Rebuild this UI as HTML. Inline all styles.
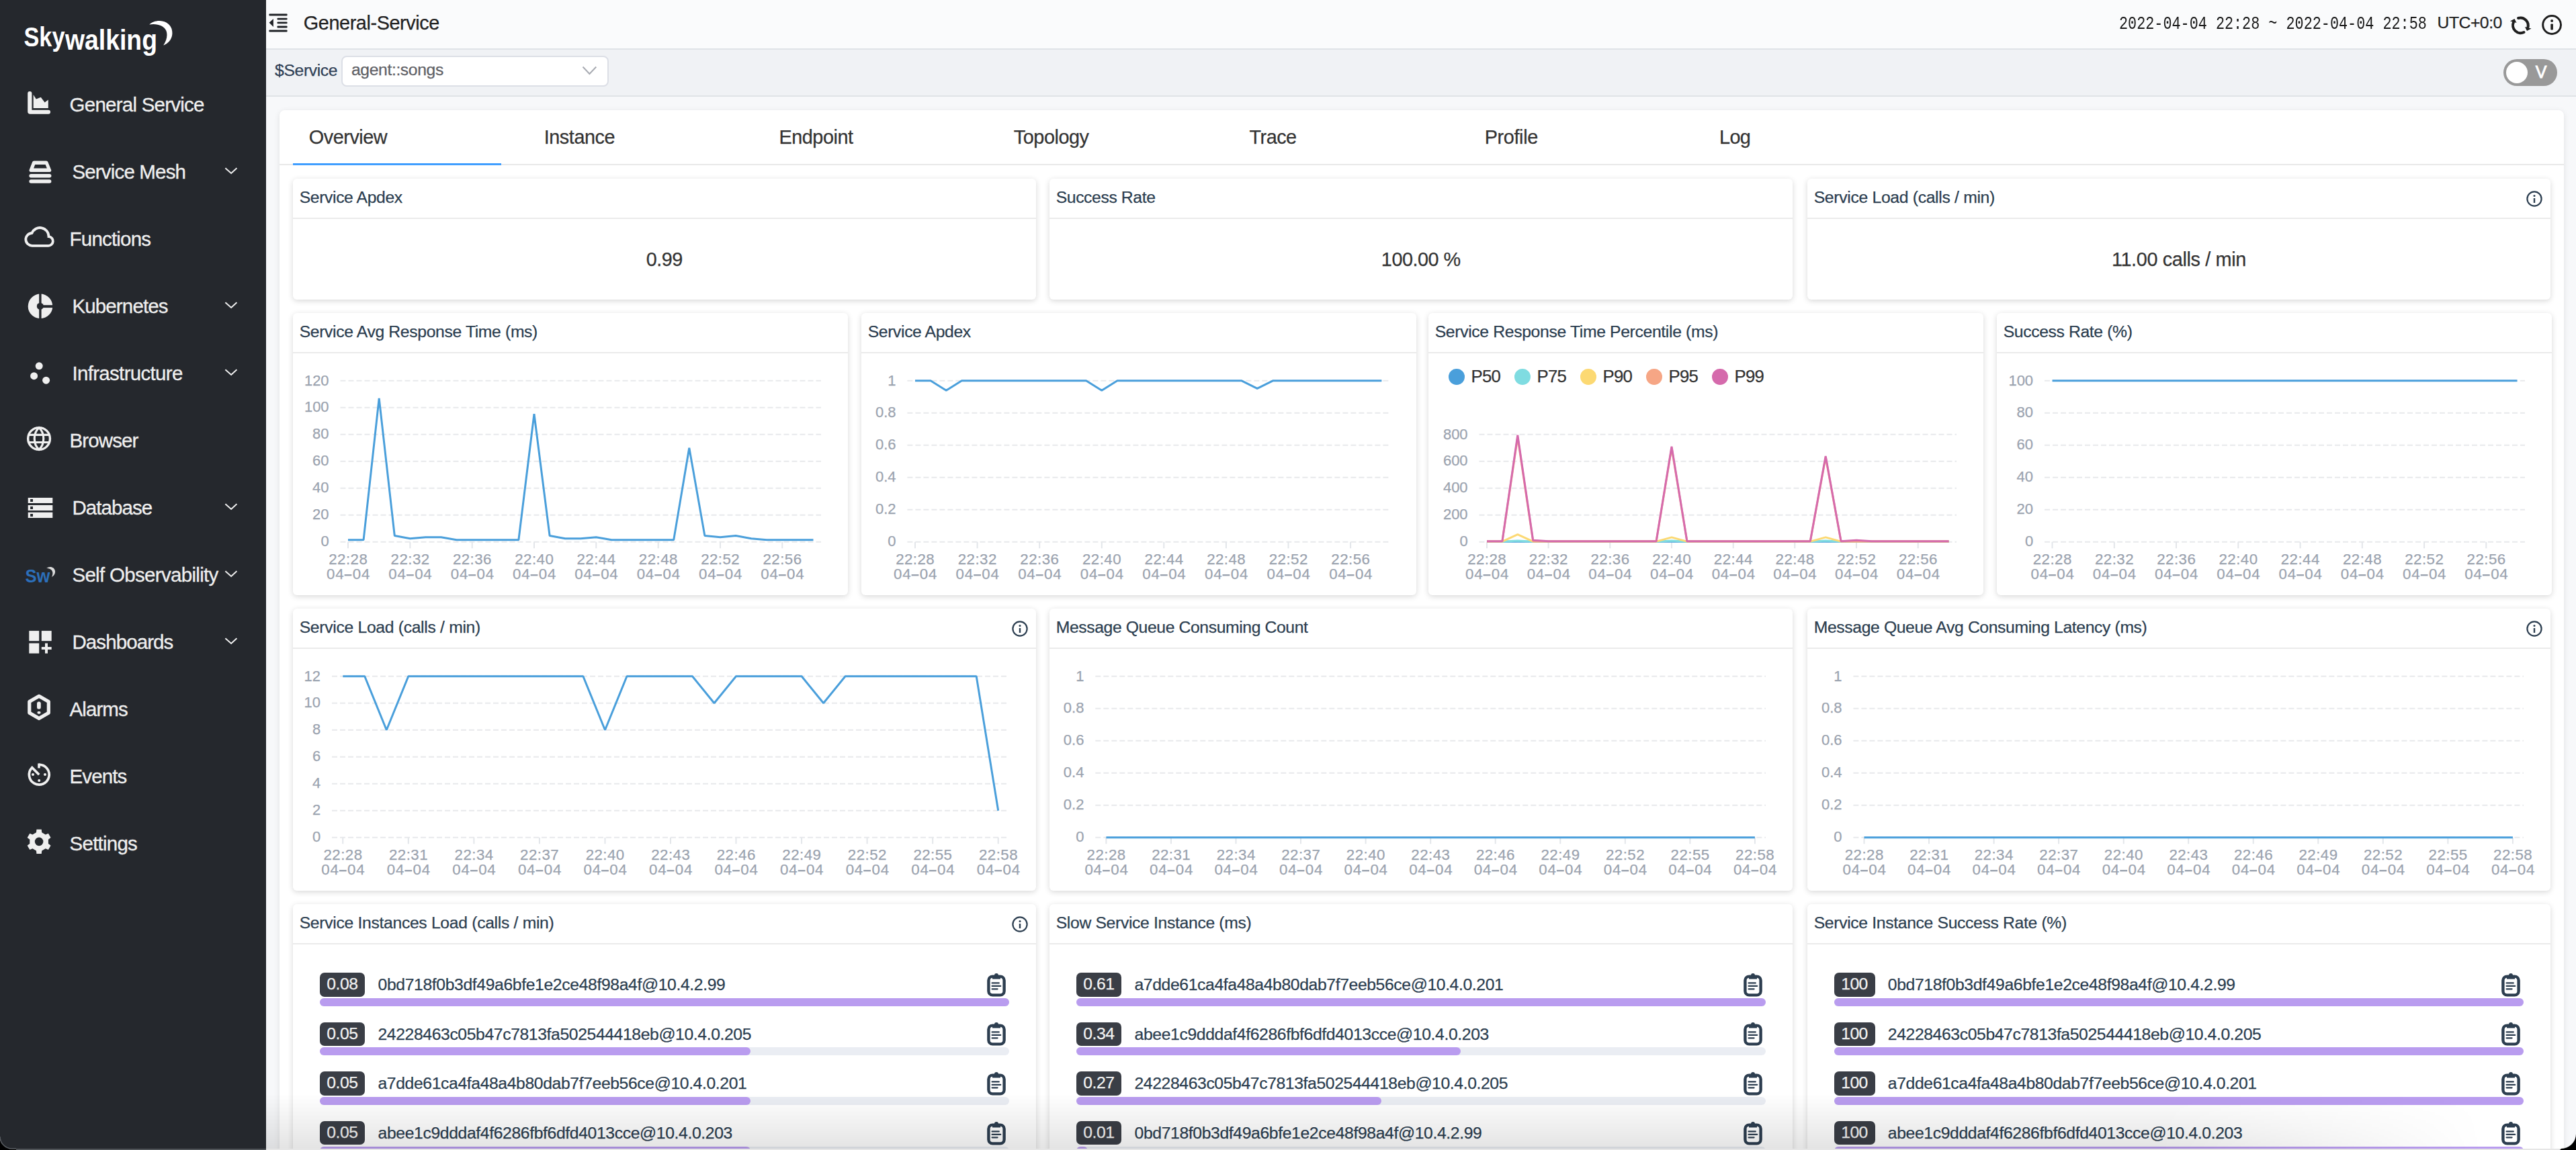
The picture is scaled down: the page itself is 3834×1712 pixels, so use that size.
<!DOCTYPE html>
<html><head><meta charset="utf-8"><title>SkyWalking</title>
<style>
html,body{margin:0;padding:0;width:3834px;height:1712px;overflow:hidden;background:#f7f8fa;font-family:"Liberation Sans",sans-serif;}
.t{position:absolute;white-space:nowrap;}
.a{position:absolute;}
</style></head><body>
<div class="a" style="left:0;top:0;width:396px;height:1712px;background:#25282d;"></div>
<svg class="a" style="left:0;top:0" width="396" height="100" viewBox="0 0 396 100">
<text x="35.5" y="69" font-family="Liberation Sans" font-weight="bold" font-size="41" fill="#fff" textLength="61" lengthAdjust="spacingAndGlyphs">Sky</text><text x="97" y="74" font-family="Liberation Sans" font-weight="bold" font-size="42" fill="#fff" textLength="137" lengthAdjust="spacingAndGlyphs">walking</text>
<path d="M222.3,36.5 C230,28.5 250,28 255.5,43 C259,55 252,64 243.2,67.4 C247.5,61 250,53 247.5,46 C244.5,38 233,34.5 222.3,36.5 Z" fill="#fff"/>
</svg>
<div class="t" style="left:103.60px;top:141.33px;font-size:29.5px;line-height:29.5px;color:#efefef;letter-spacing:-0.764px;-webkit-text-stroke:0.3px #efefef;">General Service</div>
<div class="t" style="left:107.40px;top:241.32px;font-size:29.5px;line-height:29.5px;color:#efefef;letter-spacing:-0.827px;-webkit-text-stroke:0.3px #efefef;">Service Mesh</div>
<svg class="a" style="left:330px;top:246.2px" width="30" height="20" viewBox="0 0 30 20"><polyline points="5.4,4.2 14.1,12 22.4,4.2" fill="none" stroke="#efefef" stroke-width="2"/></svg>
<div class="t" style="left:103.60px;top:341.32px;font-size:29.5px;line-height:29.5px;color:#efefef;letter-spacing:-0.812px;-webkit-text-stroke:0.3px #efefef;">Functions</div>
<div class="t" style="left:107.40px;top:441.32px;font-size:29.5px;line-height:29.5px;color:#efefef;letter-spacing:-0.856px;-webkit-text-stroke:0.3px #efefef;">Kubernetes</div>
<svg class="a" style="left:330px;top:446.2px" width="30" height="20" viewBox="0 0 30 20"><polyline points="5.4,4.2 14.1,12 22.4,4.2" fill="none" stroke="#efefef" stroke-width="2"/></svg>
<div class="t" style="left:107.40px;top:541.32px;font-size:29.5px;line-height:29.5px;color:#efefef;letter-spacing:-0.677px;-webkit-text-stroke:0.3px #efefef;">Infrastructure</div>
<svg class="a" style="left:330px;top:546.2px" width="30" height="20" viewBox="0 0 30 20"><polyline points="5.4,4.2 14.1,12 22.4,4.2" fill="none" stroke="#efefef" stroke-width="2"/></svg>
<div class="t" style="left:103.60px;top:641.32px;font-size:29.5px;line-height:29.5px;color:#efefef;letter-spacing:-0.917px;-webkit-text-stroke:0.3px #efefef;">Browser</div>
<div class="t" style="left:107.40px;top:741.32px;font-size:29.5px;line-height:29.5px;color:#efefef;letter-spacing:-0.914px;-webkit-text-stroke:0.3px #efefef;">Database</div>
<svg class="a" style="left:330px;top:746.2px" width="30" height="20" viewBox="0 0 30 20"><polyline points="5.4,4.2 14.1,12 22.4,4.2" fill="none" stroke="#efefef" stroke-width="2"/></svg>
<div class="t" style="left:107.40px;top:841.32px;font-size:29.5px;line-height:29.5px;color:#efefef;letter-spacing:-0.682px;-webkit-text-stroke:0.3px #efefef;">Self Observability</div>
<svg class="a" style="left:330px;top:846.2px" width="30" height="20" viewBox="0 0 30 20"><polyline points="5.4,4.2 14.1,12 22.4,4.2" fill="none" stroke="#efefef" stroke-width="2"/></svg>
<div class="t" style="left:107.40px;top:941.32px;font-size:29.5px;line-height:29.5px;color:#efefef;letter-spacing:-0.900px;-webkit-text-stroke:0.3px #efefef;">Dashboards</div>
<svg class="a" style="left:330px;top:946.2px" width="30" height="20" viewBox="0 0 30 20"><polyline points="5.4,4.2 14.1,12 22.4,4.2" fill="none" stroke="#efefef" stroke-width="2"/></svg>
<div class="t" style="left:103.60px;top:1041.33px;font-size:29.5px;line-height:29.5px;color:#efefef;letter-spacing:-0.940px;-webkit-text-stroke:0.3px #efefef;">Alarms</div>
<div class="t" style="left:103.60px;top:1141.33px;font-size:29.5px;line-height:29.5px;color:#efefef;letter-spacing:-0.920px;-webkit-text-stroke:0.3px #efefef;">Events</div>
<div class="t" style="left:103.60px;top:1241.33px;font-size:29.5px;line-height:29.5px;color:#efefef;letter-spacing:-0.771px;-webkit-text-stroke:0.3px #efefef;">Settings</div>
<svg class="a" style="left:0;top:0" width="100" height="1300" viewBox="0 0 100 1300">
<g fill="#efefef">
<!-- general service -->
<path d="M41.2,139 a3,3 0 0 1 6.2,0 V163.7 H72 a3,3 0 0 1 0,6.1 H45 a3.8,3.8 0 0 1 -3.8,-3.8 Z"/>
<polygon points="49.7,141 53.8,147.4 60.8,144.7 66.6,152.6 71.8,148.5 71.8,161 49.7,161"/>
<!-- service mesh -->
<path fill-rule="evenodd" d="M50.5,239.4 H69 a2.5,2.5 0 0 1 2.3,1.6 L76.2,253 a2.2,2.2 0 0 1 -2.1,2.9 H45.7 a2.2,2.2 0 0 1 -2.1,-2.9 L48.2,241 a2.5,2.5 0 0 1 2.3,-1.6 Z M52.2,245.1 H67.6 L69.9,250.6 H50.1 Z"/>
<rect x="43.4" y="259" width="33" height="5.4" rx="2.7"/>
<rect x="43.4" y="267.2" width="33" height="5.6" rx="2.8"/>
<!-- kubernetes -->
<circle cx="60" cy="455.9" r="18.3"/>
<!-- infrastructure -->
<circle cx="58.2" cy="544.8" r="5.5"/><circle cx="50.6" cy="559.7" r="5.5"/><circle cx="68.6" cy="566.2" r="5.5"/>
<!-- database -->
<path fill-rule="evenodd" d="M41.7,740.9 h36.6 v8.1 h-36.6 Z M45.1,743 v4 h3.9 v-4 Z"/>
<path fill-rule="evenodd" d="M41.7,751.9 h36.6 v8.1 h-36.6 Z M45.1,754 v4 h3.9 v-4 Z"/>
<path fill-rule="evenodd" d="M41.7,762.8 h36.6 v8.1 h-36.6 Z M45.1,764.9 v4 h3.9 v-4 Z"/>
<!-- dashboards -->
<rect x="43.3" y="939.1" width="14.9" height="15.1"/><rect x="61.8" y="939.1" width="14.9" height="15.1"/>
<rect x="43.3" y="957.6" width="14.9" height="15.1"/>
<rect x="67" y="957.6" width="4" height="15.1"/><rect x="61.8" y="963.1" width="14.9" height="3.9"/>
<!-- alarms ! -->
<rect x="55" y="1044.6" width="5.8" height="11" rx="2.9"/><rect x="55.4" y="1058.9" width="5.2" height="3.8" rx="1.9"/>
<!-- events dots -->
<circle cx="49" cy="1152.9" r="2"/><circle cx="67" cy="1152.9" r="2"/><circle cx="58.2" cy="1162" r="2"/>
<rect x="56.2" y="1136.5" width="3.6" height="7"/>
<!-- settings gear -->
<polygon points="53.95,1239.32 54.43,1234.87 61.77,1234.87 62.25,1239.32 67.78,1242.51 71.88,1240.71 75.55,1247.06 71.94,1249.71 71.94,1256.09 75.55,1258.74 71.88,1265.09 67.78,1263.29 62.25,1266.48 61.77,1270.93 54.43,1270.93 53.95,1266.48 48.42,1263.29 44.32,1265.09 40.65,1258.74 44.26,1256.09 44.26,1249.71 40.65,1247.06 44.32,1240.71 48.42,1242.51"/>
</g>
<circle cx="58.1" cy="1252.9" r="6.3" fill="#25282d"/>
<g fill="#25282d"><rect x="58.2" y="436" width="3.4" height="40"/><rect x="60" y="454.2" width="20" height="3.9"/><circle cx="59.8" cy="455.9" r="5"/></g>
<g fill="none" stroke="#efefef">
<!-- functions cloud -->
<path stroke-width="3.8" d="M48,365.8 H71.5 a6.8,6.8 0 0 0 1,-13.6 a13,13 0 0 0 -25,-5.2 a9.3,9.3 0 0 0 0.5,18.8 Z"/>
<!-- browser globe -->
<circle stroke-width="3.4" cx="58.05" cy="653" r="16.4"/>
<path stroke-width="3.2" d="M41.6,647.4 H74.5 M41.6,658.5 H74.5"/>
<path stroke-width="3.2" d="M58.05,636.6 C49,645 49,661 58.05,669.4 C67,661 67,645 58.05,636.6 Z"/>
<!-- alarms hexagon -->
<polygon stroke-width="5.2" stroke-linejoin="round" points="58.05,1036.30 72.34,1044.60 72.34,1061.20 58.05,1069.50 43.76,1061.20 43.76,1044.60"/>
<!-- events -->
<path stroke-width="3.7" d="M58.2,1138.3 A14.9,14.9 0 1 1 47.7,1142.7 L58.2,1153.2"/>
</g>
<!-- self observability -->
<text x="37.5" y="867.3" font-family="Liberation Sans" font-weight="bold" font-size="27" fill="#2c6fba" textLength="37" lengthAdjust="spacingAndGlyphs">Sw</text>
<path d="M69.2,846 C74,842 81,844 82,850 C82.5,854 80,857.5 77,859 C79,855 79,851 76.5,848.5 C74.5,846.5 71.5,846 69.2,846 Z" fill="#dcdcdc"/>
</svg>
<div class="a" style="left:396px;top:0;width:3438px;height:72px;background:#fafbfc;border-bottom:2px solid #dfe3e7;"></div>
<svg class="a" style="left:396px;top:16px" width="40" height="36" viewBox="396 16 40 36"><g fill="#1f2226">
<rect x="400.4" y="20.4" width="27.2" height="3.2" rx="1"/>
<rect x="412.5" y="26.7" width="15.1" height="2.8" rx="1"/>
<rect x="412.5" y="32.5" width="15.1" height="2.8" rx="1"/>
<rect x="412.5" y="38.6" width="15.1" height="2.8" rx="1"/>
<rect x="400.4" y="44.4" width="27.2" height="3.2" rx="1"/>
<polygon points="400.6,33.8 406.9,28 406.9,39.9"/>
</g></svg>
<div class="t" style="left:451.80px;top:19.79px;font-size:28.84px;line-height:28.84px;color:#222;letter-spacing:-0.414px;-webkit-text-stroke:0.25px #222;">General-Service</div>
<div class="t" style="left:3154px;top:27.5px;font-family:'Liberation Mono',monospace;font-size:21.8px;line-height:24px;color:#1a1a1a;transform:scaleY(1.3);transform-origin:0 100%;">2022-04-04 22:28 ~ 2022-04-04 22:58</div>
<div class="t" style="left:3627.50px;top:21.89px;font-size:24.72px;line-height:24.72px;color:#222;letter-spacing:-0.467px;-webkit-text-stroke:0.25px #222;">UTC+0:0</div>
<svg class="a" style="left:3725px;top:12px" width="100" height="50" viewBox="3725 12 100 50">
<g fill="none" stroke="#1f1f1f" stroke-width="4" stroke-linecap="round">
<path d="M3748,27 A11.5,11.5 0 0 1 3762,42"/>
<path d="M3756.5,48 A11.5,11.5 0 0 1 3741,33"/>
<circle cx="3798.1" cy="37" r="13.4" stroke-width="3" stroke-linecap="butt"/>
</g>
<g fill="#1f1f1f">
<polygon points="3736,31.5 3742.5,28 3745.5,34"/>
<polygon points="3767.5,42.5 3761,46 3758,40"/>
<circle cx="3798.1" cy="30.9" r="2"/>
<rect x="3796.3" y="35.5" width="3.6" height="9" rx="1"/>
</g></svg>
<div class="a" style="left:396px;top:74px;width:3438px;height:68px;background:#f0f2f5;border-bottom:2px solid #dfe3e7;"></div>
<div class="t" style="left:409.10px;top:93.09px;font-size:24.72px;line-height:24.72px;color:#304156;letter-spacing:-0.386px;-webkit-text-stroke:0.25px #304156;">$Service</div>
<div class="a" style="left:508px;top:82.5px;width:394px;height:42px;background:#fff;border:2px solid #dcdfe6;border-radius:8px;"></div>
<div class="t" style="left:522.90px;top:92.39px;font-size:24.72px;line-height:24.72px;color:#5f6166;letter-spacing:-0.373px;-webkit-text-stroke:0.25px #5f6166;">agent::songs</div>
<svg class="a" style="left:860px;top:94px" width="34" height="22" viewBox="860 94 34 22"><polyline points="867.5,99.5 877.4,110 887.3,99.5" fill="none" stroke="#a8abb2" stroke-width="2"/></svg>
<div class="a" style="left:3726.4px;top:87.8px;width:79.3px;height:39.9px;background:#999;border-radius:20px;"></div>
<div class="a" style="left:3729.6px;top:91.8px;width:32px;height:32px;background:#fff;border-radius:50%;"></div>
<div class="t" style="left:3773.85px;top:95.15px;font-size:25px;line-height:25px;color:#fff;-webkit-text-stroke:0.9px #fff;">V</div>
<div class="a" style="left:416px;top:164px;width:3400px;height:1620px;background:#fff;border-radius:8px;box-shadow:0 2px 8px rgba(0,0,0,0.10);"></div>
<div class="t" style="left:459.80px;top:189.69px;font-size:28.84px;line-height:28.84px;color:#333;letter-spacing:-0.471px;-webkit-text-stroke:0.25px #333;">Overview</div>
<div class="t" style="left:809.70px;top:189.69px;font-size:28.84px;line-height:28.84px;color:#333;letter-spacing:-0.443px;-webkit-text-stroke:0.25px #333;">Instance</div>
<div class="t" style="left:1159.40px;top:189.69px;font-size:28.84px;line-height:28.84px;color:#333;letter-spacing:-0.457px;-webkit-text-stroke:0.25px #333;">Endpoint</div>
<div class="t" style="left:1508.80px;top:189.69px;font-size:28.84px;line-height:28.84px;color:#333;letter-spacing:-0.457px;-webkit-text-stroke:0.25px #333;">Topology</div>
<div class="t" style="left:1859.50px;top:189.69px;font-size:28.84px;line-height:28.84px;color:#333;letter-spacing:-0.500px;-webkit-text-stroke:0.25px #333;">Trace</div>
<div class="t" style="left:2209.70px;top:189.69px;font-size:28.84px;line-height:28.84px;color:#333;letter-spacing:-0.367px;-webkit-text-stroke:0.25px #333;">Profile</div>
<div class="t" style="left:2559.10px;top:189.69px;font-size:28.84px;line-height:28.84px;color:#333;letter-spacing:-0.700px;-webkit-text-stroke:0.25px #333;">Log</div>
<div class="a" style="left:416px;top:244px;width:3400px;height:2px;background:#e9e9e9;"></div>
<div class="a" style="left:436px;top:243px;width:310px;height:3px;background:#409eff;"></div>
<div class="a" style="left:436px;top:266px;width:1106px;height:180px;background:#fff;border-radius:6px;box-shadow:0 2px 8px rgba(0,0,0,0.16);"></div>
<div class="a" style="left:436px;top:324px;width:1106px;height:2px;background:#ebebeb;"></div>
<div class="t" style="left:445.70px;top:281.69px;font-size:24.72px;line-height:24.72px;color:#2c3e50;letter-spacing:-0.375px;-webkit-text-stroke:0.25px #2c3e50;">Service Apdex</div>
<div class="t" style="left:961.75px;top:372.29px;font-size:28.84px;line-height:28.84px;color:#333;letter-spacing:-0.533px;-webkit-text-stroke:0.25px #333;">0.99</div>
<div class="a" style="left:1562px;top:266px;width:1106px;height:180px;background:#fff;border-radius:6px;box-shadow:0 2px 8px rgba(0,0,0,0.16);"></div>
<div class="a" style="left:1562px;top:324px;width:1106px;height:2px;background:#ebebeb;"></div>
<div class="t" style="left:1571.70px;top:281.69px;font-size:24.72px;line-height:24.72px;color:#2c3e50;letter-spacing:-0.391px;-webkit-text-stroke:0.25px #2c3e50;">Success Rate</div>
<div class="t" style="left:2055.85px;top:372.29px;font-size:28.84px;line-height:28.84px;color:#333;letter-spacing:-0.486px;-webkit-text-stroke:0.25px #333;">100.00 %</div>
<div class="a" style="left:2690px;top:266px;width:1106px;height:180px;background:#fff;border-radius:6px;box-shadow:0 2px 8px rgba(0,0,0,0.16);"></div>
<div class="a" style="left:2690px;top:324px;width:1106px;height:2px;background:#ebebeb;"></div>
<div class="t" style="left:2699.70px;top:281.69px;font-size:24.72px;line-height:24.72px;color:#2c3e50;letter-spacing:-0.316px;-webkit-text-stroke:0.25px #2c3e50;">Service Load (calls / min)</div>
<svg class="a" style="left:3757.5px;top:282.0px" width="28" height="28" viewBox="0 0 28 28"><circle cx="14" cy="14" r="10.6" fill="none" stroke="#2c3e50" stroke-width="2.2"/><circle cx="14" cy="9.6" r="1.5" fill="#2c3e50"/><rect x="12.8" y="13" width="2.4" height="7" fill="#2c3e50"/></svg>
<div class="t" style="left:3142.90px;top:372.29px;font-size:28.84px;line-height:28.84px;color:#333;letter-spacing:-0.363px;-webkit-text-stroke:0.25px #333;">11.00 calls / min</div>
<div class="a" style="left:436px;top:466px;width:826px;height:420px;background:#fff;border-radius:6px;box-shadow:0 2px 8px rgba(0,0,0,0.16);"></div>
<div class="a" style="left:436px;top:524px;width:826px;height:2px;background:#ebebeb;"></div>
<div class="t" style="left:445.70px;top:481.69px;font-size:24.72px;line-height:24.72px;color:#2c3e50;letter-spacing:-0.355px;-webkit-text-stroke:0.25px #2c3e50;">Service Avg Response Time (ms)</div>
<div class="a" style="left:1282px;top:466px;width:826px;height:420px;background:#fff;border-radius:6px;box-shadow:0 2px 8px rgba(0,0,0,0.16);"></div>
<div class="a" style="left:1282px;top:524px;width:826px;height:2px;background:#ebebeb;"></div>
<div class="t" style="left:1291.70px;top:481.69px;font-size:24.72px;line-height:24.72px;color:#2c3e50;letter-spacing:-0.375px;-webkit-text-stroke:0.25px #2c3e50;">Service Apdex</div>
<div class="a" style="left:2126px;top:466px;width:826px;height:420px;background:#fff;border-radius:6px;box-shadow:0 2px 8px rgba(0,0,0,0.16);"></div>
<div class="a" style="left:2126px;top:524px;width:826px;height:2px;background:#ebebeb;"></div>
<div class="t" style="left:2135.70px;top:481.69px;font-size:24.72px;line-height:24.72px;color:#2c3e50;letter-spacing:-0.342px;-webkit-text-stroke:0.25px #2c3e50;">Service Response Time Percentile (ms)</div>
<div class="a" style="left:2972px;top:466px;width:826px;height:420px;background:#fff;border-radius:6px;box-shadow:0 2px 8px rgba(0,0,0,0.16);"></div>
<div class="a" style="left:2972px;top:524px;width:826px;height:2px;background:#ebebeb;"></div>
<div class="t" style="left:2981.70px;top:481.69px;font-size:24.72px;line-height:24.72px;color:#2c3e50;letter-spacing:-0.373px;-webkit-text-stroke:0.25px #2c3e50;">Success Rate (%)</div>
<div class="a" style="left:436px;top:906px;width:1106px;height:420px;background:#fff;border-radius:6px;box-shadow:0 2px 8px rgba(0,0,0,0.16);"></div>
<div class="a" style="left:436px;top:964px;width:1106px;height:2px;background:#ebebeb;"></div>
<div class="t" style="left:445.70px;top:921.69px;font-size:24.72px;line-height:24.72px;color:#2c3e50;letter-spacing:-0.316px;-webkit-text-stroke:0.25px #2c3e50;">Service Load (calls / min)</div>
<svg class="a" style="left:1503.5px;top:922.0px" width="28" height="28" viewBox="0 0 28 28"><circle cx="14" cy="14" r="10.6" fill="none" stroke="#2c3e50" stroke-width="2.2"/><circle cx="14" cy="9.6" r="1.5" fill="#2c3e50"/><rect x="12.8" y="13" width="2.4" height="7" fill="#2c3e50"/></svg>
<div class="a" style="left:1562px;top:906px;width:1106px;height:420px;background:#fff;border-radius:6px;box-shadow:0 2px 8px rgba(0,0,0,0.16);"></div>
<div class="a" style="left:1562px;top:964px;width:1106px;height:2px;background:#ebebeb;"></div>
<div class="t" style="left:1571.70px;top:921.69px;font-size:24.72px;line-height:24.72px;color:#2c3e50;letter-spacing:-0.389px;-webkit-text-stroke:0.25px #2c3e50;">Message Queue Consuming Count</div>
<div class="a" style="left:2690px;top:906px;width:1106px;height:420px;background:#fff;border-radius:6px;box-shadow:0 2px 8px rgba(0,0,0,0.16);"></div>
<div class="a" style="left:2690px;top:964px;width:1106px;height:2px;background:#ebebeb;"></div>
<div class="t" style="left:2699.70px;top:921.69px;font-size:24.72px;line-height:24.72px;color:#2c3e50;letter-spacing:-0.372px;-webkit-text-stroke:0.25px #2c3e50;">Message Queue Avg Consuming Latency (ms)</div>
<svg class="a" style="left:3757.5px;top:922.0px" width="28" height="28" viewBox="0 0 28 28"><circle cx="14" cy="14" r="10.6" fill="none" stroke="#2c3e50" stroke-width="2.2"/><circle cx="14" cy="9.6" r="1.5" fill="#2c3e50"/><rect x="12.8" y="13" width="2.4" height="7" fill="#2c3e50"/></svg>
<div class="a" style="left:436px;top:1346px;width:1106px;height:420px;background:#fff;border-radius:6px;box-shadow:0 2px 8px rgba(0,0,0,0.16);"></div>
<div class="a" style="left:436px;top:1404px;width:1106px;height:2px;background:#ebebeb;"></div>
<div class="t" style="left:445.70px;top:1361.69px;font-size:24.72px;line-height:24.72px;color:#2c3e50;letter-spacing:-0.317px;-webkit-text-stroke:0.25px #2c3e50;">Service Instances Load (calls / min)</div>
<svg class="a" style="left:1503.5px;top:1362.0px" width="28" height="28" viewBox="0 0 28 28"><circle cx="14" cy="14" r="10.6" fill="none" stroke="#2c3e50" stroke-width="2.2"/><circle cx="14" cy="9.6" r="1.5" fill="#2c3e50"/><rect x="12.8" y="13" width="2.4" height="7" fill="#2c3e50"/></svg>
<div class="a" style="left:1562px;top:1346px;width:1106px;height:420px;background:#fff;border-radius:6px;box-shadow:0 2px 8px rgba(0,0,0,0.16);"></div>
<div class="a" style="left:1562px;top:1404px;width:1106px;height:2px;background:#ebebeb;"></div>
<div class="t" style="left:1571.70px;top:1361.69px;font-size:24.72px;line-height:24.72px;color:#2c3e50;letter-spacing:-0.336px;-webkit-text-stroke:0.25px #2c3e50;">Slow Service Instance (ms)</div>
<div class="a" style="left:2690px;top:1346px;width:1106px;height:420px;background:#fff;border-radius:6px;box-shadow:0 2px 8px rgba(0,0,0,0.16);"></div>
<div class="a" style="left:2690px;top:1404px;width:1106px;height:2px;background:#ebebeb;"></div>
<div class="t" style="left:2699.70px;top:1361.69px;font-size:24.72px;line-height:24.72px;color:#2c3e50;letter-spacing:-0.341px;-webkit-text-stroke:0.25px #2c3e50;">Service Instance Success Rate (%)</div>
<div class="t" style="left:452.90px;top:555.50px;font-size:22.0px;line-height:22.0px;color:#9ba3af;letter-spacing:0.000px;-webkit-text-stroke:0.25px #9ba3af;">120</div>
<div class="t" style="left:452.90px;top:595.48px;font-size:22.0px;line-height:22.0px;color:#9ba3af;letter-spacing:0.000px;-webkit-text-stroke:0.25px #9ba3af;">100</div>
<div class="t" style="left:465.10px;top:635.47px;font-size:22.0px;line-height:22.0px;color:#9ba3af;letter-spacing:0.000px;-webkit-text-stroke:0.25px #9ba3af;">80</div>
<div class="t" style="left:465.10px;top:675.45px;font-size:22.0px;line-height:22.0px;color:#9ba3af;letter-spacing:0.000px;-webkit-text-stroke:0.25px #9ba3af;">60</div>
<div class="t" style="left:465.10px;top:715.43px;font-size:22.0px;line-height:22.0px;color:#9ba3af;letter-spacing:0.000px;-webkit-text-stroke:0.25px #9ba3af;">40</div>
<div class="t" style="left:465.10px;top:755.42px;font-size:22.0px;line-height:22.0px;color:#9ba3af;letter-spacing:0.000px;-webkit-text-stroke:0.25px #9ba3af;">20</div>
<div class="t" style="left:477.40px;top:795.40px;font-size:22.0px;line-height:22.0px;color:#9ba3af;letter-spacing:0.000px;-webkit-text-stroke:0.25px #9ba3af;">0</div>
<div class="t" style="left:489.24px;top:821.74px;font-size:22.31px;line-height:22.31px;color:#9ba3af;letter-spacing:0.450px;-webkit-text-stroke:0.25px #9ba3af;">22:28</div>
<div class="t" style="left:486.04px;top:843.54px;font-size:22.31px;line-height:22.31px;color:#9ba3af;letter-spacing:0.800px;-webkit-text-stroke:0.25px #9ba3af;">04</div>
<div class="t" style="left:524.84px;top:843.54px;font-size:22.31px;line-height:22.31px;color:#9ba3af;letter-spacing:0.800px;-webkit-text-stroke:0.25px #9ba3af;">04</div>
<div class="t" style="left:581.56px;top:821.74px;font-size:22.31px;line-height:22.31px;color:#9ba3af;letter-spacing:0.450px;-webkit-text-stroke:0.25px #9ba3af;">22:32</div>
<div class="t" style="left:578.36px;top:843.54px;font-size:22.31px;line-height:22.31px;color:#9ba3af;letter-spacing:0.800px;-webkit-text-stroke:0.25px #9ba3af;">04</div>
<div class="t" style="left:617.16px;top:843.54px;font-size:22.31px;line-height:22.31px;color:#9ba3af;letter-spacing:0.800px;-webkit-text-stroke:0.25px #9ba3af;">04</div>
<div class="t" style="left:673.89px;top:821.74px;font-size:22.31px;line-height:22.31px;color:#9ba3af;letter-spacing:0.450px;-webkit-text-stroke:0.25px #9ba3af;">22:36</div>
<div class="t" style="left:670.69px;top:843.54px;font-size:22.31px;line-height:22.31px;color:#9ba3af;letter-spacing:0.800px;-webkit-text-stroke:0.25px #9ba3af;">04</div>
<div class="t" style="left:709.49px;top:843.54px;font-size:22.31px;line-height:22.31px;color:#9ba3af;letter-spacing:0.800px;-webkit-text-stroke:0.25px #9ba3af;">04</div>
<div class="t" style="left:766.21px;top:821.74px;font-size:22.31px;line-height:22.31px;color:#9ba3af;letter-spacing:0.450px;-webkit-text-stroke:0.25px #9ba3af;">22:40</div>
<div class="t" style="left:763.01px;top:843.54px;font-size:22.31px;line-height:22.31px;color:#9ba3af;letter-spacing:0.800px;-webkit-text-stroke:0.25px #9ba3af;">04</div>
<div class="t" style="left:801.81px;top:843.54px;font-size:22.31px;line-height:22.31px;color:#9ba3af;letter-spacing:0.800px;-webkit-text-stroke:0.25px #9ba3af;">04</div>
<div class="t" style="left:858.53px;top:821.74px;font-size:22.31px;line-height:22.31px;color:#9ba3af;letter-spacing:0.450px;-webkit-text-stroke:0.25px #9ba3af;">22:44</div>
<div class="t" style="left:855.33px;top:843.54px;font-size:22.31px;line-height:22.31px;color:#9ba3af;letter-spacing:0.800px;-webkit-text-stroke:0.25px #9ba3af;">04</div>
<div class="t" style="left:894.13px;top:843.54px;font-size:22.31px;line-height:22.31px;color:#9ba3af;letter-spacing:0.800px;-webkit-text-stroke:0.25px #9ba3af;">04</div>
<div class="t" style="left:950.85px;top:821.74px;font-size:22.31px;line-height:22.31px;color:#9ba3af;letter-spacing:0.450px;-webkit-text-stroke:0.25px #9ba3af;">22:48</div>
<div class="t" style="left:947.65px;top:843.54px;font-size:22.31px;line-height:22.31px;color:#9ba3af;letter-spacing:0.800px;-webkit-text-stroke:0.25px #9ba3af;">04</div>
<div class="t" style="left:986.45px;top:843.54px;font-size:22.31px;line-height:22.31px;color:#9ba3af;letter-spacing:0.800px;-webkit-text-stroke:0.25px #9ba3af;">04</div>
<div class="t" style="left:1043.18px;top:821.74px;font-size:22.31px;line-height:22.31px;color:#9ba3af;letter-spacing:0.450px;-webkit-text-stroke:0.25px #9ba3af;">22:52</div>
<div class="t" style="left:1039.98px;top:843.54px;font-size:22.31px;line-height:22.31px;color:#9ba3af;letter-spacing:0.800px;-webkit-text-stroke:0.25px #9ba3af;">04</div>
<div class="t" style="left:1078.78px;top:843.54px;font-size:22.31px;line-height:22.31px;color:#9ba3af;letter-spacing:0.800px;-webkit-text-stroke:0.25px #9ba3af;">04</div>
<div class="t" style="left:1135.50px;top:821.74px;font-size:22.31px;line-height:22.31px;color:#9ba3af;letter-spacing:0.450px;-webkit-text-stroke:0.25px #9ba3af;">22:56</div>
<div class="t" style="left:1132.30px;top:843.54px;font-size:22.31px;line-height:22.31px;color:#9ba3af;letter-spacing:0.800px;-webkit-text-stroke:0.25px #9ba3af;">04</div>
<div class="t" style="left:1171.10px;top:843.54px;font-size:22.31px;line-height:22.31px;color:#9ba3af;letter-spacing:0.800px;-webkit-text-stroke:0.25px #9ba3af;">04</div>
<svg class="a" style="left:0;top:0;pointer-events:none" width="3834" height="1712" viewBox="0 0 3834 1712"><line x1="506.5" y1="566.8" x2="1222.0" y2="566.8" stroke="#e8e9ec" stroke-width="2" stroke-dasharray="8 4"/><line x1="506.5" y1="606.8" x2="1222.0" y2="606.8" stroke="#e8e9ec" stroke-width="2" stroke-dasharray="8 4"/><line x1="506.5" y1="646.8" x2="1222.0" y2="646.8" stroke="#e8e9ec" stroke-width="2" stroke-dasharray="8 4"/><line x1="506.5" y1="686.8" x2="1222.0" y2="686.8" stroke="#e8e9ec" stroke-width="2" stroke-dasharray="8 4"/><line x1="506.5" y1="726.7" x2="1222.0" y2="726.7" stroke="#e8e9ec" stroke-width="2" stroke-dasharray="8 4"/><line x1="506.5" y1="766.7" x2="1222.0" y2="766.7" stroke="#e8e9ec" stroke-width="2" stroke-dasharray="8 4"/><line x1="506.5" y1="806.7" x2="1222.0" y2="806.7" stroke="#e8e9ec" stroke-width="2" stroke-dasharray="8 4"/><line x1="518.0" y1="806.7" x2="518.0" y2="816.3" stroke="#e3e6ea" stroke-width="2"/><rect x="512.6" y="855.0" width="10.8" height="2.4" fill="#9ba3af"/><line x1="610.4" y1="806.7" x2="610.4" y2="816.3" stroke="#e3e6ea" stroke-width="2"/><rect x="605.0" y="855.0" width="10.8" height="2.4" fill="#9ba3af"/><line x1="702.7" y1="806.7" x2="702.7" y2="816.3" stroke="#e3e6ea" stroke-width="2"/><rect x="697.3" y="855.0" width="10.8" height="2.4" fill="#9ba3af"/><line x1="795.0" y1="806.7" x2="795.0" y2="816.3" stroke="#e3e6ea" stroke-width="2"/><rect x="789.6" y="855.0" width="10.8" height="2.4" fill="#9ba3af"/><line x1="887.3" y1="806.7" x2="887.3" y2="816.3" stroke="#e3e6ea" stroke-width="2"/><rect x="881.9" y="855.0" width="10.8" height="2.4" fill="#9ba3af"/><line x1="979.7" y1="806.7" x2="979.7" y2="816.3" stroke="#e3e6ea" stroke-width="2"/><rect x="974.3" y="855.0" width="10.8" height="2.4" fill="#9ba3af"/><line x1="1072.0" y1="806.7" x2="1072.0" y2="816.3" stroke="#e3e6ea" stroke-width="2"/><rect x="1066.6" y="855.0" width="10.8" height="2.4" fill="#9ba3af"/><line x1="1164.3" y1="806.7" x2="1164.3" y2="816.3" stroke="#e3e6ea" stroke-width="2"/><rect x="1158.9" y="855.0" width="10.8" height="2.4" fill="#9ba3af"/><polyline points="518.0,803.7 541.1,803.7 564.2,592.8 587.3,797.5 610.4,801.7 633.4,799.7 656.5,799.7 679.6,803.7 702.7,803.7 725.8,803.7 748.8,803.7 771.9,803.7 795.0,616.2 818.1,797.5 841.2,801.7 864.2,801.7 887.3,799.7 910.4,803.7 933.5,803.7 956.6,803.7 979.7,803.7 1002.7,803.7 1025.8,666.8 1048.9,797.5 1072.0,799.7 1095.1,797.5 1118.1,801.7 1141.2,803.7 1164.3,803.7 1187.4,803.7 1210.5,803.7" fill="none" stroke="#4a9fdb" stroke-width="3" stroke-linejoin="bevel"/></svg>
<div class="t" style="left:1321.30px;top:555.50px;font-size:22.0px;line-height:22.0px;color:#9ba3af;letter-spacing:0.000px;-webkit-text-stroke:0.25px #9ba3af;">1</div>
<div class="t" style="left:1302.90px;top:603.48px;font-size:22.0px;line-height:22.0px;color:#9ba3af;letter-spacing:0.000px;-webkit-text-stroke:0.25px #9ba3af;">0.8</div>
<div class="t" style="left:1302.90px;top:651.46px;font-size:22.0px;line-height:22.0px;color:#9ba3af;letter-spacing:0.000px;-webkit-text-stroke:0.25px #9ba3af;">0.6</div>
<div class="t" style="left:1302.90px;top:699.44px;font-size:22.0px;line-height:22.0px;color:#9ba3af;letter-spacing:0.000px;-webkit-text-stroke:0.25px #9ba3af;">0.4</div>
<div class="t" style="left:1302.90px;top:747.42px;font-size:22.0px;line-height:22.0px;color:#9ba3af;letter-spacing:0.000px;-webkit-text-stroke:0.25px #9ba3af;">0.2</div>
<div class="t" style="left:1321.30px;top:795.40px;font-size:22.0px;line-height:22.0px;color:#9ba3af;letter-spacing:0.000px;-webkit-text-stroke:0.25px #9ba3af;">0</div>
<div class="t" style="left:1333.17px;top:821.74px;font-size:22.31px;line-height:22.31px;color:#9ba3af;letter-spacing:0.450px;-webkit-text-stroke:0.25px #9ba3af;">22:28</div>
<div class="t" style="left:1329.97px;top:843.54px;font-size:22.31px;line-height:22.31px;color:#9ba3af;letter-spacing:0.800px;-webkit-text-stroke:0.25px #9ba3af;">04</div>
<div class="t" style="left:1368.77px;top:843.54px;font-size:22.31px;line-height:22.31px;color:#9ba3af;letter-spacing:0.800px;-webkit-text-stroke:0.25px #9ba3af;">04</div>
<div class="t" style="left:1425.77px;top:821.74px;font-size:22.31px;line-height:22.31px;color:#9ba3af;letter-spacing:0.450px;-webkit-text-stroke:0.25px #9ba3af;">22:32</div>
<div class="t" style="left:1422.57px;top:843.54px;font-size:22.31px;line-height:22.31px;color:#9ba3af;letter-spacing:0.800px;-webkit-text-stroke:0.25px #9ba3af;">04</div>
<div class="t" style="left:1461.37px;top:843.54px;font-size:22.31px;line-height:22.31px;color:#9ba3af;letter-spacing:0.800px;-webkit-text-stroke:0.25px #9ba3af;">04</div>
<div class="t" style="left:1518.36px;top:821.74px;font-size:22.31px;line-height:22.31px;color:#9ba3af;letter-spacing:0.450px;-webkit-text-stroke:0.25px #9ba3af;">22:36</div>
<div class="t" style="left:1515.16px;top:843.54px;font-size:22.31px;line-height:22.31px;color:#9ba3af;letter-spacing:0.800px;-webkit-text-stroke:0.25px #9ba3af;">04</div>
<div class="t" style="left:1553.96px;top:843.54px;font-size:22.31px;line-height:22.31px;color:#9ba3af;letter-spacing:0.800px;-webkit-text-stroke:0.25px #9ba3af;">04</div>
<div class="t" style="left:1610.95px;top:821.74px;font-size:22.31px;line-height:22.31px;color:#9ba3af;letter-spacing:0.450px;-webkit-text-stroke:0.25px #9ba3af;">22:40</div>
<div class="t" style="left:1607.75px;top:843.54px;font-size:22.31px;line-height:22.31px;color:#9ba3af;letter-spacing:0.800px;-webkit-text-stroke:0.25px #9ba3af;">04</div>
<div class="t" style="left:1646.55px;top:843.54px;font-size:22.31px;line-height:22.31px;color:#9ba3af;letter-spacing:0.800px;-webkit-text-stroke:0.25px #9ba3af;">04</div>
<div class="t" style="left:1703.55px;top:821.74px;font-size:22.31px;line-height:22.31px;color:#9ba3af;letter-spacing:0.450px;-webkit-text-stroke:0.25px #9ba3af;">22:44</div>
<div class="t" style="left:1700.35px;top:843.54px;font-size:22.31px;line-height:22.31px;color:#9ba3af;letter-spacing:0.800px;-webkit-text-stroke:0.25px #9ba3af;">04</div>
<div class="t" style="left:1739.15px;top:843.54px;font-size:22.31px;line-height:22.31px;color:#9ba3af;letter-spacing:0.800px;-webkit-text-stroke:0.25px #9ba3af;">04</div>
<div class="t" style="left:1796.14px;top:821.74px;font-size:22.31px;line-height:22.31px;color:#9ba3af;letter-spacing:0.450px;-webkit-text-stroke:0.25px #9ba3af;">22:48</div>
<div class="t" style="left:1792.94px;top:843.54px;font-size:22.31px;line-height:22.31px;color:#9ba3af;letter-spacing:0.800px;-webkit-text-stroke:0.25px #9ba3af;">04</div>
<div class="t" style="left:1831.74px;top:843.54px;font-size:22.31px;line-height:22.31px;color:#9ba3af;letter-spacing:0.800px;-webkit-text-stroke:0.25px #9ba3af;">04</div>
<div class="t" style="left:1888.74px;top:821.74px;font-size:22.31px;line-height:22.31px;color:#9ba3af;letter-spacing:0.450px;-webkit-text-stroke:0.25px #9ba3af;">22:52</div>
<div class="t" style="left:1885.54px;top:843.54px;font-size:22.31px;line-height:22.31px;color:#9ba3af;letter-spacing:0.800px;-webkit-text-stroke:0.25px #9ba3af;">04</div>
<div class="t" style="left:1924.34px;top:843.54px;font-size:22.31px;line-height:22.31px;color:#9ba3af;letter-spacing:0.800px;-webkit-text-stroke:0.25px #9ba3af;">04</div>
<div class="t" style="left:1981.33px;top:821.74px;font-size:22.31px;line-height:22.31px;color:#9ba3af;letter-spacing:0.450px;-webkit-text-stroke:0.25px #9ba3af;">22:56</div>
<div class="t" style="left:1978.13px;top:843.54px;font-size:22.31px;line-height:22.31px;color:#9ba3af;letter-spacing:0.800px;-webkit-text-stroke:0.25px #9ba3af;">04</div>
<div class="t" style="left:2016.93px;top:843.54px;font-size:22.31px;line-height:22.31px;color:#9ba3af;letter-spacing:0.800px;-webkit-text-stroke:0.25px #9ba3af;">04</div>
<svg class="a" style="left:0;top:0;pointer-events:none" width="3834" height="1712" viewBox="0 0 3834 1712"><line x1="1350.4" y1="566.8" x2="2068.0" y2="566.8" stroke="#e8e9ec" stroke-width="2" stroke-dasharray="8 4"/><line x1="1350.4" y1="614.8" x2="2068.0" y2="614.8" stroke="#e8e9ec" stroke-width="2" stroke-dasharray="8 4"/><line x1="1350.4" y1="662.8" x2="2068.0" y2="662.8" stroke="#e8e9ec" stroke-width="2" stroke-dasharray="8 4"/><line x1="1350.4" y1="710.7" x2="2068.0" y2="710.7" stroke="#e8e9ec" stroke-width="2" stroke-dasharray="8 4"/><line x1="1350.4" y1="758.7" x2="2068.0" y2="758.7" stroke="#e8e9ec" stroke-width="2" stroke-dasharray="8 4"/><line x1="1350.4" y1="806.7" x2="2068.0" y2="806.7" stroke="#e8e9ec" stroke-width="2" stroke-dasharray="8 4"/><line x1="1362.0" y1="806.7" x2="1362.0" y2="816.3" stroke="#e3e6ea" stroke-width="2"/><rect x="1356.6" y="855.0" width="10.8" height="2.4" fill="#9ba3af"/><line x1="1454.6" y1="806.7" x2="1454.6" y2="816.3" stroke="#e3e6ea" stroke-width="2"/><rect x="1449.2" y="855.0" width="10.8" height="2.4" fill="#9ba3af"/><line x1="1547.2" y1="806.7" x2="1547.2" y2="816.3" stroke="#e3e6ea" stroke-width="2"/><rect x="1541.8" y="855.0" width="10.8" height="2.4" fill="#9ba3af"/><line x1="1639.8" y1="806.7" x2="1639.8" y2="816.3" stroke="#e3e6ea" stroke-width="2"/><rect x="1634.4" y="855.0" width="10.8" height="2.4" fill="#9ba3af"/><line x1="1732.3" y1="806.7" x2="1732.3" y2="816.3" stroke="#e3e6ea" stroke-width="2"/><rect x="1726.9" y="855.0" width="10.8" height="2.4" fill="#9ba3af"/><line x1="1824.9" y1="806.7" x2="1824.9" y2="816.3" stroke="#e3e6ea" stroke-width="2"/><rect x="1819.5" y="855.0" width="10.8" height="2.4" fill="#9ba3af"/><line x1="1917.5" y1="806.7" x2="1917.5" y2="816.3" stroke="#e3e6ea" stroke-width="2"/><rect x="1912.1" y="855.0" width="10.8" height="2.4" fill="#9ba3af"/><line x1="2010.1" y1="806.7" x2="2010.1" y2="816.3" stroke="#e3e6ea" stroke-width="2"/><rect x="2004.7" y="855.0" width="10.8" height="2.4" fill="#9ba3af"/><polyline points="1362.0,566.8 1385.1,566.8 1408.3,581.2 1431.4,566.8 1454.6,566.8 1477.7,566.8 1500.9,566.8 1524.0,566.8 1547.2,566.8 1570.3,566.8 1593.5,566.8 1616.6,566.8 1639.8,581.2 1662.9,566.8 1686.1,566.8 1709.2,566.8 1732.3,566.8 1755.5,566.8 1778.6,566.8 1801.8,566.8 1824.9,566.8 1848.1,566.8 1871.2,578.3 1894.4,566.8 1917.5,566.8 1940.7,566.8 1963.8,566.8 1987.0,566.8 2010.1,566.8 2033.3,566.8 2056.4,566.8" fill="none" stroke="#4a9fdb" stroke-width="3" stroke-linejoin="bevel"/></svg>
<div class="t" style="left:2147.90px;top:635.50px;font-size:22.0px;line-height:22.0px;color:#9ba3af;letter-spacing:0.000px;-webkit-text-stroke:0.25px #9ba3af;">800</div>
<div class="t" style="left:2147.90px;top:675.47px;font-size:22.0px;line-height:22.0px;color:#9ba3af;letter-spacing:0.000px;-webkit-text-stroke:0.25px #9ba3af;">600</div>
<div class="t" style="left:2147.90px;top:715.45px;font-size:22.0px;line-height:22.0px;color:#9ba3af;letter-spacing:0.000px;-webkit-text-stroke:0.25px #9ba3af;">400</div>
<div class="t" style="left:2147.90px;top:755.42px;font-size:22.0px;line-height:22.0px;color:#9ba3af;letter-spacing:0.000px;-webkit-text-stroke:0.25px #9ba3af;">200</div>
<div class="t" style="left:2172.40px;top:795.40px;font-size:22.0px;line-height:22.0px;color:#9ba3af;letter-spacing:0.000px;-webkit-text-stroke:0.25px #9ba3af;">0</div>
<div class="t" style="left:2184.16px;top:821.74px;font-size:22.31px;line-height:22.31px;color:#9ba3af;letter-spacing:0.450px;-webkit-text-stroke:0.25px #9ba3af;">22:28</div>
<div class="t" style="left:2180.96px;top:843.54px;font-size:22.31px;line-height:22.31px;color:#9ba3af;letter-spacing:0.800px;-webkit-text-stroke:0.25px #9ba3af;">04</div>
<div class="t" style="left:2219.76px;top:843.54px;font-size:22.31px;line-height:22.31px;color:#9ba3af;letter-spacing:0.800px;-webkit-text-stroke:0.25px #9ba3af;">04</div>
<div class="t" style="left:2275.84px;top:821.74px;font-size:22.31px;line-height:22.31px;color:#9ba3af;letter-spacing:0.450px;-webkit-text-stroke:0.25px #9ba3af;">22:32</div>
<div class="t" style="left:2272.64px;top:843.54px;font-size:22.31px;line-height:22.31px;color:#9ba3af;letter-spacing:0.800px;-webkit-text-stroke:0.25px #9ba3af;">04</div>
<div class="t" style="left:2311.44px;top:843.54px;font-size:22.31px;line-height:22.31px;color:#9ba3af;letter-spacing:0.800px;-webkit-text-stroke:0.25px #9ba3af;">04</div>
<div class="t" style="left:2367.51px;top:821.74px;font-size:22.31px;line-height:22.31px;color:#9ba3af;letter-spacing:0.450px;-webkit-text-stroke:0.25px #9ba3af;">22:36</div>
<div class="t" style="left:2364.31px;top:843.54px;font-size:22.31px;line-height:22.31px;color:#9ba3af;letter-spacing:0.800px;-webkit-text-stroke:0.25px #9ba3af;">04</div>
<div class="t" style="left:2403.11px;top:843.54px;font-size:22.31px;line-height:22.31px;color:#9ba3af;letter-spacing:0.800px;-webkit-text-stroke:0.25px #9ba3af;">04</div>
<div class="t" style="left:2459.19px;top:821.74px;font-size:22.31px;line-height:22.31px;color:#9ba3af;letter-spacing:0.450px;-webkit-text-stroke:0.25px #9ba3af;">22:40</div>
<div class="t" style="left:2455.99px;top:843.54px;font-size:22.31px;line-height:22.31px;color:#9ba3af;letter-spacing:0.800px;-webkit-text-stroke:0.25px #9ba3af;">04</div>
<div class="t" style="left:2494.79px;top:843.54px;font-size:22.31px;line-height:22.31px;color:#9ba3af;letter-spacing:0.800px;-webkit-text-stroke:0.25px #9ba3af;">04</div>
<div class="t" style="left:2550.87px;top:821.74px;font-size:22.31px;line-height:22.31px;color:#9ba3af;letter-spacing:0.450px;-webkit-text-stroke:0.25px #9ba3af;">22:44</div>
<div class="t" style="left:2547.67px;top:843.54px;font-size:22.31px;line-height:22.31px;color:#9ba3af;letter-spacing:0.800px;-webkit-text-stroke:0.25px #9ba3af;">04</div>
<div class="t" style="left:2586.47px;top:843.54px;font-size:22.31px;line-height:22.31px;color:#9ba3af;letter-spacing:0.800px;-webkit-text-stroke:0.25px #9ba3af;">04</div>
<div class="t" style="left:2642.55px;top:821.74px;font-size:22.31px;line-height:22.31px;color:#9ba3af;letter-spacing:0.450px;-webkit-text-stroke:0.25px #9ba3af;">22:48</div>
<div class="t" style="left:2639.35px;top:843.54px;font-size:22.31px;line-height:22.31px;color:#9ba3af;letter-spacing:0.800px;-webkit-text-stroke:0.25px #9ba3af;">04</div>
<div class="t" style="left:2678.15px;top:843.54px;font-size:22.31px;line-height:22.31px;color:#9ba3af;letter-spacing:0.800px;-webkit-text-stroke:0.25px #9ba3af;">04</div>
<div class="t" style="left:2734.22px;top:821.74px;font-size:22.31px;line-height:22.31px;color:#9ba3af;letter-spacing:0.450px;-webkit-text-stroke:0.25px #9ba3af;">22:52</div>
<div class="t" style="left:2731.02px;top:843.54px;font-size:22.31px;line-height:22.31px;color:#9ba3af;letter-spacing:0.800px;-webkit-text-stroke:0.25px #9ba3af;">04</div>
<div class="t" style="left:2769.82px;top:843.54px;font-size:22.31px;line-height:22.31px;color:#9ba3af;letter-spacing:0.800px;-webkit-text-stroke:0.25px #9ba3af;">04</div>
<div class="t" style="left:2825.90px;top:821.74px;font-size:22.31px;line-height:22.31px;color:#9ba3af;letter-spacing:0.450px;-webkit-text-stroke:0.25px #9ba3af;">22:56</div>
<div class="t" style="left:2822.70px;top:843.54px;font-size:22.31px;line-height:22.31px;color:#9ba3af;letter-spacing:0.800px;-webkit-text-stroke:0.25px #9ba3af;">04</div>
<div class="t" style="left:2861.50px;top:843.54px;font-size:22.31px;line-height:22.31px;color:#9ba3af;letter-spacing:0.800px;-webkit-text-stroke:0.25px #9ba3af;">04</div>
<svg class="a" style="left:0;top:0;pointer-events:none" width="3834" height="1712" viewBox="0 0 3834 1712"><line x1="2201.5" y1="646.8" x2="2912.0" y2="646.8" stroke="#e8e9ec" stroke-width="2" stroke-dasharray="8 4"/><line x1="2201.5" y1="686.8" x2="2912.0" y2="686.8" stroke="#e8e9ec" stroke-width="2" stroke-dasharray="8 4"/><line x1="2201.5" y1="726.8" x2="2912.0" y2="726.8" stroke="#e8e9ec" stroke-width="2" stroke-dasharray="8 4"/><line x1="2201.5" y1="766.7" x2="2912.0" y2="766.7" stroke="#e8e9ec" stroke-width="2" stroke-dasharray="8 4"/><line x1="2201.5" y1="806.7" x2="2912.0" y2="806.7" stroke="#e8e9ec" stroke-width="2" stroke-dasharray="8 4"/><line x1="2213.0" y1="806.7" x2="2213.0" y2="816.3" stroke="#e3e6ea" stroke-width="2"/><rect x="2207.6" y="855.0" width="10.8" height="2.4" fill="#9ba3af"/><line x1="2304.6" y1="806.7" x2="2304.6" y2="816.3" stroke="#e3e6ea" stroke-width="2"/><rect x="2299.2" y="855.0" width="10.8" height="2.4" fill="#9ba3af"/><line x1="2396.3" y1="806.7" x2="2396.3" y2="816.3" stroke="#e3e6ea" stroke-width="2"/><rect x="2390.9" y="855.0" width="10.8" height="2.4" fill="#9ba3af"/><line x1="2488.0" y1="806.7" x2="2488.0" y2="816.3" stroke="#e3e6ea" stroke-width="2"/><rect x="2482.6" y="855.0" width="10.8" height="2.4" fill="#9ba3af"/><line x1="2579.7" y1="806.7" x2="2579.7" y2="816.3" stroke="#e3e6ea" stroke-width="2"/><rect x="2574.3" y="855.0" width="10.8" height="2.4" fill="#9ba3af"/><line x1="2671.3" y1="806.7" x2="2671.3" y2="816.3" stroke="#e3e6ea" stroke-width="2"/><rect x="2665.9" y="855.0" width="10.8" height="2.4" fill="#9ba3af"/><line x1="2763.0" y1="806.7" x2="2763.0" y2="816.3" stroke="#e3e6ea" stroke-width="2"/><rect x="2757.6" y="855.0" width="10.8" height="2.4" fill="#9ba3af"/><line x1="2854.7" y1="806.7" x2="2854.7" y2="816.3" stroke="#e3e6ea" stroke-width="2"/><rect x="2849.3" y="855.0" width="10.8" height="2.4" fill="#9ba3af"/><polyline points="2213.0,806.3 2235.9,806.3 2258.8,806.3 2281.7,806.3 2304.6,806.3 2327.6,806.3 2350.5,806.3 2373.4,806.3 2396.3,806.3 2419.2,806.3 2442.2,806.3 2465.1,806.3 2488.0,806.3 2510.9,806.3 2533.8,806.3 2556.8,806.3 2579.7,806.3 2602.6,806.3 2625.5,806.3 2648.4,806.3 2671.3,806.3 2694.3,806.3 2717.2,806.3 2740.1,806.3 2763.0,806.3 2785.9,806.3 2808.9,806.3 2831.8,806.3 2854.7,806.3 2877.6,806.3 2900.5,806.3" fill="none" stroke="#4a9fdb" stroke-width="3" stroke-linejoin="bevel"/><polyline points="2213.0,806.2 2235.9,806.2 2258.8,804.9 2281.7,806.2 2304.6,806.2 2327.6,806.2 2350.5,806.2 2373.4,806.2 2396.3,806.2 2419.2,806.2 2442.2,806.2 2465.1,806.2 2488.0,804.9 2510.9,806.2 2533.8,806.2 2556.8,806.2 2579.7,806.2 2602.6,806.2 2625.5,806.2 2648.4,806.2 2671.3,806.2 2694.3,806.2 2717.2,804.9 2740.1,806.2 2763.0,806.2 2785.9,806.2 2808.9,806.2 2831.8,806.2 2854.7,806.2 2877.6,806.2 2900.5,806.2" fill="none" stroke="#7fdce1" stroke-width="3" stroke-linejoin="bevel"/><polyline points="2213.0,806.1 2235.9,806.1 2258.8,795.7 2281.7,806.1 2304.6,806.1 2327.6,806.1 2350.5,806.1 2373.4,806.1 2396.3,806.1 2419.2,806.1 2442.2,806.1 2465.1,806.1 2488.0,799.9 2510.9,806.1 2533.8,806.1 2556.8,806.1 2579.7,806.1 2602.6,806.1 2625.5,806.1 2648.4,806.1 2671.3,806.1 2694.3,806.1 2717.2,799.9 2740.1,806.1 2763.0,806.1 2785.9,806.1 2808.9,806.1 2831.8,806.1 2854.7,806.1 2877.6,806.1 2900.5,806.1" fill="none" stroke="#fcd973" stroke-width="3" stroke-linejoin="bevel"/><polyline points="2213.0,805.9 2235.9,805.9 2258.8,650.8 2281.7,805.9 2304.6,805.9 2327.6,805.9 2350.5,805.9 2373.4,805.9 2396.3,805.9 2419.2,805.9 2442.2,805.9 2465.1,805.9 2488.0,666.8 2510.9,805.9 2533.8,805.9 2556.8,805.9 2579.7,805.9 2602.6,805.9 2625.5,805.9 2648.4,805.9 2671.3,805.9 2694.3,805.9 2717.2,680.8 2740.1,805.9 2763.0,805.9 2785.9,805.9 2808.9,805.9 2831.8,805.9 2854.7,805.9 2877.6,805.9 2900.5,805.9" fill="none" stroke="#f6a685" stroke-width="3" stroke-linejoin="bevel"/><polyline points="2213.0,805.7 2235.9,805.7 2258.8,647.6 2281.7,804.3 2304.6,805.7 2327.6,805.7 2350.5,805.7 2373.4,805.7 2396.3,805.7 2419.2,805.7 2442.2,805.7 2465.1,805.7 2488.0,664.8 2510.9,805.7 2533.8,805.7 2556.8,805.7 2579.7,805.7 2602.6,805.7 2625.5,805.7 2648.4,805.7 2671.3,805.7 2694.3,805.7 2717.2,679.0 2740.1,805.7 2763.0,804.3 2785.9,805.7 2808.9,805.7 2831.8,805.7 2854.7,805.7 2877.6,805.7 2900.5,805.7" fill="none" stroke="#d56aac" stroke-width="3" stroke-linejoin="bevel"/></svg>
<div class="a" style="left:2156.0px;top:549.1px;width:23.8px;height:23.8px;border-radius:50%;background:#4a9fdb;"></div>
<div class="t" style="left:2189.50px;top:547.91px;font-size:25.75px;line-height:25.75px;color:#333;letter-spacing:-0.700px;-webkit-text-stroke:0.25px #333;">P50</div>
<div class="a" style="left:2254.0px;top:549.1px;width:23.8px;height:23.8px;border-radius:50%;background:#7fdce1;"></div>
<div class="t" style="left:2287.50px;top:547.91px;font-size:25.75px;line-height:25.75px;color:#333;letter-spacing:-0.700px;-webkit-text-stroke:0.25px #333;">P75</div>
<div class="a" style="left:2352.0px;top:549.1px;width:23.8px;height:23.8px;border-radius:50%;background:#fcd973;"></div>
<div class="t" style="left:2385.50px;top:547.91px;font-size:25.75px;line-height:25.75px;color:#333;letter-spacing:-0.700px;-webkit-text-stroke:0.25px #333;">P90</div>
<div class="a" style="left:2450.0px;top:549.1px;width:23.8px;height:23.8px;border-radius:50%;background:#f6a685;"></div>
<div class="t" style="left:2483.50px;top:547.91px;font-size:25.75px;line-height:25.75px;color:#333;letter-spacing:-0.700px;-webkit-text-stroke:0.25px #333;">P95</div>
<div class="a" style="left:2548.0px;top:549.1px;width:23.8px;height:23.8px;border-radius:50%;background:#d56aac;"></div>
<div class="t" style="left:2581.50px;top:547.91px;font-size:25.75px;line-height:25.75px;color:#333;letter-spacing:-0.700px;-webkit-text-stroke:0.25px #333;">P99</div>
<div class="t" style="left:2989.40px;top:555.50px;font-size:22.0px;line-height:22.0px;color:#9ba3af;letter-spacing:0.000px;-webkit-text-stroke:0.25px #9ba3af;">100</div>
<div class="t" style="left:3001.60px;top:603.48px;font-size:22.0px;line-height:22.0px;color:#9ba3af;letter-spacing:0.000px;-webkit-text-stroke:0.25px #9ba3af;">80</div>
<div class="t" style="left:3001.60px;top:651.46px;font-size:22.0px;line-height:22.0px;color:#9ba3af;letter-spacing:0.000px;-webkit-text-stroke:0.25px #9ba3af;">60</div>
<div class="t" style="left:3001.60px;top:699.44px;font-size:22.0px;line-height:22.0px;color:#9ba3af;letter-spacing:0.000px;-webkit-text-stroke:0.25px #9ba3af;">40</div>
<div class="t" style="left:3001.60px;top:747.42px;font-size:22.0px;line-height:22.0px;color:#9ba3af;letter-spacing:0.000px;-webkit-text-stroke:0.25px #9ba3af;">20</div>
<div class="t" style="left:3013.90px;top:795.40px;font-size:22.0px;line-height:22.0px;color:#9ba3af;letter-spacing:0.000px;-webkit-text-stroke:0.25px #9ba3af;">0</div>
<div class="t" style="left:3025.73px;top:821.74px;font-size:22.31px;line-height:22.31px;color:#9ba3af;letter-spacing:0.450px;-webkit-text-stroke:0.25px #9ba3af;">22:28</div>
<div class="t" style="left:3022.53px;top:843.54px;font-size:22.31px;line-height:22.31px;color:#9ba3af;letter-spacing:0.800px;-webkit-text-stroke:0.25px #9ba3af;">04</div>
<div class="t" style="left:3061.33px;top:843.54px;font-size:22.31px;line-height:22.31px;color:#9ba3af;letter-spacing:0.800px;-webkit-text-stroke:0.25px #9ba3af;">04</div>
<div class="t" style="left:3117.99px;top:821.74px;font-size:22.31px;line-height:22.31px;color:#9ba3af;letter-spacing:0.450px;-webkit-text-stroke:0.25px #9ba3af;">22:32</div>
<div class="t" style="left:3114.79px;top:843.54px;font-size:22.31px;line-height:22.31px;color:#9ba3af;letter-spacing:0.800px;-webkit-text-stroke:0.25px #9ba3af;">04</div>
<div class="t" style="left:3153.59px;top:843.54px;font-size:22.31px;line-height:22.31px;color:#9ba3af;letter-spacing:0.800px;-webkit-text-stroke:0.25px #9ba3af;">04</div>
<div class="t" style="left:3210.25px;top:821.74px;font-size:22.31px;line-height:22.31px;color:#9ba3af;letter-spacing:0.450px;-webkit-text-stroke:0.25px #9ba3af;">22:36</div>
<div class="t" style="left:3207.05px;top:843.54px;font-size:22.31px;line-height:22.31px;color:#9ba3af;letter-spacing:0.800px;-webkit-text-stroke:0.25px #9ba3af;">04</div>
<div class="t" style="left:3245.85px;top:843.54px;font-size:22.31px;line-height:22.31px;color:#9ba3af;letter-spacing:0.800px;-webkit-text-stroke:0.25px #9ba3af;">04</div>
<div class="t" style="left:3302.51px;top:821.74px;font-size:22.31px;line-height:22.31px;color:#9ba3af;letter-spacing:0.450px;-webkit-text-stroke:0.25px #9ba3af;">22:40</div>
<div class="t" style="left:3299.31px;top:843.54px;font-size:22.31px;line-height:22.31px;color:#9ba3af;letter-spacing:0.800px;-webkit-text-stroke:0.25px #9ba3af;">04</div>
<div class="t" style="left:3338.11px;top:843.54px;font-size:22.31px;line-height:22.31px;color:#9ba3af;letter-spacing:0.800px;-webkit-text-stroke:0.25px #9ba3af;">04</div>
<div class="t" style="left:3394.76px;top:821.74px;font-size:22.31px;line-height:22.31px;color:#9ba3af;letter-spacing:0.450px;-webkit-text-stroke:0.25px #9ba3af;">22:44</div>
<div class="t" style="left:3391.56px;top:843.54px;font-size:22.31px;line-height:22.31px;color:#9ba3af;letter-spacing:0.800px;-webkit-text-stroke:0.25px #9ba3af;">04</div>
<div class="t" style="left:3430.36px;top:843.54px;font-size:22.31px;line-height:22.31px;color:#9ba3af;letter-spacing:0.800px;-webkit-text-stroke:0.25px #9ba3af;">04</div>
<div class="t" style="left:3487.02px;top:821.74px;font-size:22.31px;line-height:22.31px;color:#9ba3af;letter-spacing:0.450px;-webkit-text-stroke:0.25px #9ba3af;">22:48</div>
<div class="t" style="left:3483.82px;top:843.54px;font-size:22.31px;line-height:22.31px;color:#9ba3af;letter-spacing:0.800px;-webkit-text-stroke:0.25px #9ba3af;">04</div>
<div class="t" style="left:3522.62px;top:843.54px;font-size:22.31px;line-height:22.31px;color:#9ba3af;letter-spacing:0.800px;-webkit-text-stroke:0.25px #9ba3af;">04</div>
<div class="t" style="left:3579.28px;top:821.74px;font-size:22.31px;line-height:22.31px;color:#9ba3af;letter-spacing:0.450px;-webkit-text-stroke:0.25px #9ba3af;">22:52</div>
<div class="t" style="left:3576.08px;top:843.54px;font-size:22.31px;line-height:22.31px;color:#9ba3af;letter-spacing:0.800px;-webkit-text-stroke:0.25px #9ba3af;">04</div>
<div class="t" style="left:3614.88px;top:843.54px;font-size:22.31px;line-height:22.31px;color:#9ba3af;letter-spacing:0.800px;-webkit-text-stroke:0.25px #9ba3af;">04</div>
<div class="t" style="left:3671.54px;top:821.74px;font-size:22.31px;line-height:22.31px;color:#9ba3af;letter-spacing:0.450px;-webkit-text-stroke:0.25px #9ba3af;">22:56</div>
<div class="t" style="left:3668.34px;top:843.54px;font-size:22.31px;line-height:22.31px;color:#9ba3af;letter-spacing:0.800px;-webkit-text-stroke:0.25px #9ba3af;">04</div>
<div class="t" style="left:3707.14px;top:843.54px;font-size:22.31px;line-height:22.31px;color:#9ba3af;letter-spacing:0.800px;-webkit-text-stroke:0.25px #9ba3af;">04</div>
<svg class="a" style="left:0;top:0;pointer-events:none" width="3834" height="1712" viewBox="0 0 3834 1712"><line x1="3043.0" y1="566.8" x2="3758.0" y2="566.8" stroke="#e8e9ec" stroke-width="2" stroke-dasharray="8 4"/><line x1="3043.0" y1="614.8" x2="3758.0" y2="614.8" stroke="#e8e9ec" stroke-width="2" stroke-dasharray="8 4"/><line x1="3043.0" y1="662.8" x2="3758.0" y2="662.8" stroke="#e8e9ec" stroke-width="2" stroke-dasharray="8 4"/><line x1="3043.0" y1="710.7" x2="3758.0" y2="710.7" stroke="#e8e9ec" stroke-width="2" stroke-dasharray="8 4"/><line x1="3043.0" y1="758.7" x2="3758.0" y2="758.7" stroke="#e8e9ec" stroke-width="2" stroke-dasharray="8 4"/><line x1="3043.0" y1="806.7" x2="3758.0" y2="806.7" stroke="#e8e9ec" stroke-width="2" stroke-dasharray="8 4"/><line x1="3054.5" y1="806.7" x2="3054.5" y2="816.3" stroke="#e3e6ea" stroke-width="2"/><rect x="3049.1" y="855.0" width="10.8" height="2.4" fill="#9ba3af"/><line x1="3146.8" y1="806.7" x2="3146.8" y2="816.3" stroke="#e3e6ea" stroke-width="2"/><rect x="3141.4" y="855.0" width="10.8" height="2.4" fill="#9ba3af"/><line x1="3239.0" y1="806.7" x2="3239.0" y2="816.3" stroke="#e3e6ea" stroke-width="2"/><rect x="3233.6" y="855.0" width="10.8" height="2.4" fill="#9ba3af"/><line x1="3331.3" y1="806.7" x2="3331.3" y2="816.3" stroke="#e3e6ea" stroke-width="2"/><rect x="3325.9" y="855.0" width="10.8" height="2.4" fill="#9ba3af"/><line x1="3423.6" y1="806.7" x2="3423.6" y2="816.3" stroke="#e3e6ea" stroke-width="2"/><rect x="3418.2" y="855.0" width="10.8" height="2.4" fill="#9ba3af"/><line x1="3515.8" y1="806.7" x2="3515.8" y2="816.3" stroke="#e3e6ea" stroke-width="2"/><rect x="3510.4" y="855.0" width="10.8" height="2.4" fill="#9ba3af"/><line x1="3608.1" y1="806.7" x2="3608.1" y2="816.3" stroke="#e3e6ea" stroke-width="2"/><rect x="3602.7" y="855.0" width="10.8" height="2.4" fill="#9ba3af"/><line x1="3700.3" y1="806.7" x2="3700.3" y2="816.3" stroke="#e3e6ea" stroke-width="2"/><rect x="3694.9" y="855.0" width="10.8" height="2.4" fill="#9ba3af"/><polyline points="3054.5,566.8 3077.6,566.8 3100.7,566.8 3123.7,566.8 3146.8,566.8 3169.9,566.8 3192.9,566.8 3216.0,566.8 3239.0,566.8 3262.1,566.8 3285.2,566.8 3308.2,566.8 3331.3,566.8 3354.4,566.8 3377.4,566.8 3400.5,566.8 3423.6,566.8 3446.6,566.8 3469.7,566.8 3492.8,566.8 3515.8,566.8 3538.9,566.8 3562.0,566.8 3585.0,566.8 3608.1,566.8 3631.1,566.8 3654.2,566.8 3677.3,566.8 3700.3,566.8 3723.4,566.8 3746.5,566.8" fill="none" stroke="#4a9fdb" stroke-width="3" stroke-linejoin="bevel"/></svg>
<div class="t" style="left:452.60px;top:995.50px;font-size:22.0px;line-height:22.0px;color:#9ba3af;letter-spacing:0.000px;-webkit-text-stroke:0.25px #9ba3af;">12</div>
<div class="t" style="left:452.60px;top:1035.48px;font-size:22.0px;line-height:22.0px;color:#9ba3af;letter-spacing:0.000px;-webkit-text-stroke:0.25px #9ba3af;">10</div>
<div class="t" style="left:464.90px;top:1075.47px;font-size:22.0px;line-height:22.0px;color:#9ba3af;letter-spacing:0.000px;-webkit-text-stroke:0.25px #9ba3af;">8</div>
<div class="t" style="left:464.90px;top:1115.45px;font-size:22.0px;line-height:22.0px;color:#9ba3af;letter-spacing:0.000px;-webkit-text-stroke:0.25px #9ba3af;">6</div>
<div class="t" style="left:464.90px;top:1155.43px;font-size:22.0px;line-height:22.0px;color:#9ba3af;letter-spacing:0.000px;-webkit-text-stroke:0.25px #9ba3af;">4</div>
<div class="t" style="left:464.90px;top:1195.42px;font-size:22.0px;line-height:22.0px;color:#9ba3af;letter-spacing:0.000px;-webkit-text-stroke:0.25px #9ba3af;">2</div>
<div class="t" style="left:464.90px;top:1235.40px;font-size:22.0px;line-height:22.0px;color:#9ba3af;letter-spacing:0.000px;-webkit-text-stroke:0.25px #9ba3af;">0</div>
<div class="t" style="left:481.46px;top:1261.74px;font-size:22.31px;line-height:22.31px;color:#9ba3af;letter-spacing:0.450px;-webkit-text-stroke:0.25px #9ba3af;">22:28</div>
<div class="t" style="left:478.26px;top:1283.54px;font-size:22.31px;line-height:22.31px;color:#9ba3af;letter-spacing:0.800px;-webkit-text-stroke:0.25px #9ba3af;">04</div>
<div class="t" style="left:517.06px;top:1283.54px;font-size:22.31px;line-height:22.31px;color:#9ba3af;letter-spacing:0.800px;-webkit-text-stroke:0.25px #9ba3af;">04</div>
<div class="t" style="left:579.01px;top:1261.74px;font-size:22.31px;line-height:22.31px;color:#9ba3af;letter-spacing:0.450px;-webkit-text-stroke:0.25px #9ba3af;">22:31</div>
<div class="t" style="left:575.81px;top:1283.54px;font-size:22.31px;line-height:22.31px;color:#9ba3af;letter-spacing:0.800px;-webkit-text-stroke:0.25px #9ba3af;">04</div>
<div class="t" style="left:614.61px;top:1283.54px;font-size:22.31px;line-height:22.31px;color:#9ba3af;letter-spacing:0.800px;-webkit-text-stroke:0.25px #9ba3af;">04</div>
<div class="t" style="left:676.55px;top:1261.74px;font-size:22.31px;line-height:22.31px;color:#9ba3af;letter-spacing:0.450px;-webkit-text-stroke:0.25px #9ba3af;">22:34</div>
<div class="t" style="left:673.35px;top:1283.54px;font-size:22.31px;line-height:22.31px;color:#9ba3af;letter-spacing:0.800px;-webkit-text-stroke:0.25px #9ba3af;">04</div>
<div class="t" style="left:712.15px;top:1283.54px;font-size:22.31px;line-height:22.31px;color:#9ba3af;letter-spacing:0.800px;-webkit-text-stroke:0.25px #9ba3af;">04</div>
<div class="t" style="left:774.10px;top:1261.74px;font-size:22.31px;line-height:22.31px;color:#9ba3af;letter-spacing:0.450px;-webkit-text-stroke:0.25px #9ba3af;">22:37</div>
<div class="t" style="left:770.90px;top:1283.54px;font-size:22.31px;line-height:22.31px;color:#9ba3af;letter-spacing:0.800px;-webkit-text-stroke:0.25px #9ba3af;">04</div>
<div class="t" style="left:809.70px;top:1283.54px;font-size:22.31px;line-height:22.31px;color:#9ba3af;letter-spacing:0.800px;-webkit-text-stroke:0.25px #9ba3af;">04</div>
<div class="t" style="left:871.65px;top:1261.74px;font-size:22.31px;line-height:22.31px;color:#9ba3af;letter-spacing:0.450px;-webkit-text-stroke:0.25px #9ba3af;">22:40</div>
<div class="t" style="left:868.45px;top:1283.54px;font-size:22.31px;line-height:22.31px;color:#9ba3af;letter-spacing:0.800px;-webkit-text-stroke:0.25px #9ba3af;">04</div>
<div class="t" style="left:907.25px;top:1283.54px;font-size:22.31px;line-height:22.31px;color:#9ba3af;letter-spacing:0.800px;-webkit-text-stroke:0.25px #9ba3af;">04</div>
<div class="t" style="left:969.20px;top:1261.74px;font-size:22.31px;line-height:22.31px;color:#9ba3af;letter-spacing:0.450px;-webkit-text-stroke:0.25px #9ba3af;">22:43</div>
<div class="t" style="left:966.00px;top:1283.54px;font-size:22.31px;line-height:22.31px;color:#9ba3af;letter-spacing:0.800px;-webkit-text-stroke:0.25px #9ba3af;">04</div>
<div class="t" style="left:1004.80px;top:1283.54px;font-size:22.31px;line-height:22.31px;color:#9ba3af;letter-spacing:0.800px;-webkit-text-stroke:0.25px #9ba3af;">04</div>
<div class="t" style="left:1066.75px;top:1261.74px;font-size:22.31px;line-height:22.31px;color:#9ba3af;letter-spacing:0.450px;-webkit-text-stroke:0.25px #9ba3af;">22:46</div>
<div class="t" style="left:1063.55px;top:1283.54px;font-size:22.31px;line-height:22.31px;color:#9ba3af;letter-spacing:0.800px;-webkit-text-stroke:0.25px #9ba3af;">04</div>
<div class="t" style="left:1102.35px;top:1283.54px;font-size:22.31px;line-height:22.31px;color:#9ba3af;letter-spacing:0.800px;-webkit-text-stroke:0.25px #9ba3af;">04</div>
<div class="t" style="left:1164.30px;top:1261.74px;font-size:22.31px;line-height:22.31px;color:#9ba3af;letter-spacing:0.450px;-webkit-text-stroke:0.25px #9ba3af;">22:49</div>
<div class="t" style="left:1161.10px;top:1283.54px;font-size:22.31px;line-height:22.31px;color:#9ba3af;letter-spacing:0.800px;-webkit-text-stroke:0.25px #9ba3af;">04</div>
<div class="t" style="left:1199.90px;top:1283.54px;font-size:22.31px;line-height:22.31px;color:#9ba3af;letter-spacing:0.800px;-webkit-text-stroke:0.25px #9ba3af;">04</div>
<div class="t" style="left:1261.85px;top:1261.74px;font-size:22.31px;line-height:22.31px;color:#9ba3af;letter-spacing:0.450px;-webkit-text-stroke:0.25px #9ba3af;">22:52</div>
<div class="t" style="left:1258.65px;top:1283.54px;font-size:22.31px;line-height:22.31px;color:#9ba3af;letter-spacing:0.800px;-webkit-text-stroke:0.25px #9ba3af;">04</div>
<div class="t" style="left:1297.45px;top:1283.54px;font-size:22.31px;line-height:22.31px;color:#9ba3af;letter-spacing:0.800px;-webkit-text-stroke:0.25px #9ba3af;">04</div>
<div class="t" style="left:1359.39px;top:1261.74px;font-size:22.31px;line-height:22.31px;color:#9ba3af;letter-spacing:0.450px;-webkit-text-stroke:0.25px #9ba3af;">22:55</div>
<div class="t" style="left:1356.19px;top:1283.54px;font-size:22.31px;line-height:22.31px;color:#9ba3af;letter-spacing:0.800px;-webkit-text-stroke:0.25px #9ba3af;">04</div>
<div class="t" style="left:1394.99px;top:1283.54px;font-size:22.31px;line-height:22.31px;color:#9ba3af;letter-spacing:0.800px;-webkit-text-stroke:0.25px #9ba3af;">04</div>
<div class="t" style="left:1456.94px;top:1261.74px;font-size:22.31px;line-height:22.31px;color:#9ba3af;letter-spacing:0.450px;-webkit-text-stroke:0.25px #9ba3af;">22:58</div>
<div class="t" style="left:1453.74px;top:1283.54px;font-size:22.31px;line-height:22.31px;color:#9ba3af;letter-spacing:0.800px;-webkit-text-stroke:0.25px #9ba3af;">04</div>
<div class="t" style="left:1492.54px;top:1283.54px;font-size:22.31px;line-height:22.31px;color:#9ba3af;letter-spacing:0.800px;-webkit-text-stroke:0.25px #9ba3af;">04</div>
<svg class="a" style="left:0;top:0;pointer-events:none" width="3834" height="1712" viewBox="0 0 3834 1712"><line x1="494.0" y1="1006.8" x2="1502.0" y2="1006.8" stroke="#e8e9ec" stroke-width="2" stroke-dasharray="8 4"/><line x1="494.0" y1="1046.8" x2="1502.0" y2="1046.8" stroke="#e8e9ec" stroke-width="2" stroke-dasharray="8 4"/><line x1="494.0" y1="1086.8" x2="1502.0" y2="1086.8" stroke="#e8e9ec" stroke-width="2" stroke-dasharray="8 4"/><line x1="494.0" y1="1126.8" x2="1502.0" y2="1126.8" stroke="#e8e9ec" stroke-width="2" stroke-dasharray="8 4"/><line x1="494.0" y1="1166.7" x2="1502.0" y2="1166.7" stroke="#e8e9ec" stroke-width="2" stroke-dasharray="8 4"/><line x1="494.0" y1="1206.7" x2="1502.0" y2="1206.7" stroke="#e8e9ec" stroke-width="2" stroke-dasharray="8 4"/><line x1="494.0" y1="1246.7" x2="1502.0" y2="1246.7" stroke="#e8e9ec" stroke-width="2" stroke-dasharray="8 4"/><line x1="510.3" y1="1246.7" x2="510.3" y2="1256.3" stroke="#e3e6ea" stroke-width="2"/><rect x="504.9" y="1295.0" width="10.8" height="2.4" fill="#9ba3af"/><line x1="607.8" y1="1246.7" x2="607.8" y2="1256.3" stroke="#e3e6ea" stroke-width="2"/><rect x="602.4" y="1295.0" width="10.8" height="2.4" fill="#9ba3af"/><line x1="705.4" y1="1246.7" x2="705.4" y2="1256.3" stroke="#e3e6ea" stroke-width="2"/><rect x="700.0" y="1295.0" width="10.8" height="2.4" fill="#9ba3af"/><line x1="802.9" y1="1246.7" x2="802.9" y2="1256.3" stroke="#e3e6ea" stroke-width="2"/><rect x="797.5" y="1295.0" width="10.8" height="2.4" fill="#9ba3af"/><line x1="900.5" y1="1246.7" x2="900.5" y2="1256.3" stroke="#e3e6ea" stroke-width="2"/><rect x="895.1" y="1295.0" width="10.8" height="2.4" fill="#9ba3af"/><line x1="998.0" y1="1246.7" x2="998.0" y2="1256.3" stroke="#e3e6ea" stroke-width="2"/><rect x="992.6" y="1295.0" width="10.8" height="2.4" fill="#9ba3af"/><line x1="1095.5" y1="1246.7" x2="1095.5" y2="1256.3" stroke="#e3e6ea" stroke-width="2"/><rect x="1090.1" y="1295.0" width="10.8" height="2.4" fill="#9ba3af"/><line x1="1193.1" y1="1246.7" x2="1193.1" y2="1256.3" stroke="#e3e6ea" stroke-width="2"/><rect x="1187.7" y="1295.0" width="10.8" height="2.4" fill="#9ba3af"/><line x1="1290.6" y1="1246.7" x2="1290.6" y2="1256.3" stroke="#e3e6ea" stroke-width="2"/><rect x="1285.2" y="1295.0" width="10.8" height="2.4" fill="#9ba3af"/><line x1="1388.2" y1="1246.7" x2="1388.2" y2="1256.3" stroke="#e3e6ea" stroke-width="2"/><rect x="1382.8" y="1295.0" width="10.8" height="2.4" fill="#9ba3af"/><line x1="1485.7" y1="1246.7" x2="1485.7" y2="1256.3" stroke="#e3e6ea" stroke-width="2"/><rect x="1480.3" y="1295.0" width="10.8" height="2.4" fill="#9ba3af"/><polyline points="510.3,1006.8 542.8,1006.8 575.3,1086.8 607.8,1006.8 640.3,1006.8 672.8,1006.8 705.4,1006.8 737.9,1006.8 770.4,1006.8 802.9,1006.8 835.4,1006.8 867.9,1006.8 900.5,1086.8 933.0,1006.8 965.5,1006.8 998.0,1006.8 1030.5,1006.8 1063.0,1046.8 1095.5,1006.8 1128.1,1006.8 1160.6,1006.8 1193.1,1006.8 1225.6,1046.8 1258.1,1006.8 1290.6,1006.8 1323.2,1006.8 1355.7,1006.8 1388.2,1006.8 1420.7,1006.8 1453.2,1006.8 1485.7,1206.7" fill="none" stroke="#4a9fdb" stroke-width="3" stroke-linejoin="bevel"/></svg>
<div class="t" style="left:1601.20px;top:995.50px;font-size:22.0px;line-height:22.0px;color:#9ba3af;letter-spacing:0.000px;-webkit-text-stroke:0.25px #9ba3af;">1</div>
<div class="t" style="left:1582.80px;top:1043.48px;font-size:22.0px;line-height:22.0px;color:#9ba3af;letter-spacing:0.000px;-webkit-text-stroke:0.25px #9ba3af;">0.8</div>
<div class="t" style="left:1582.80px;top:1091.46px;font-size:22.0px;line-height:22.0px;color:#9ba3af;letter-spacing:0.000px;-webkit-text-stroke:0.25px #9ba3af;">0.6</div>
<div class="t" style="left:1582.80px;top:1139.44px;font-size:22.0px;line-height:22.0px;color:#9ba3af;letter-spacing:0.000px;-webkit-text-stroke:0.25px #9ba3af;">0.4</div>
<div class="t" style="left:1582.80px;top:1187.42px;font-size:22.0px;line-height:22.0px;color:#9ba3af;letter-spacing:0.000px;-webkit-text-stroke:0.25px #9ba3af;">0.2</div>
<div class="t" style="left:1601.20px;top:1235.40px;font-size:22.0px;line-height:22.0px;color:#9ba3af;letter-spacing:0.000px;-webkit-text-stroke:0.25px #9ba3af;">0</div>
<div class="t" style="left:1617.59px;top:1261.74px;font-size:22.31px;line-height:22.31px;color:#9ba3af;letter-spacing:0.450px;-webkit-text-stroke:0.25px #9ba3af;">22:28</div>
<div class="t" style="left:1614.39px;top:1283.54px;font-size:22.31px;line-height:22.31px;color:#9ba3af;letter-spacing:0.800px;-webkit-text-stroke:0.25px #9ba3af;">04</div>
<div class="t" style="left:1653.19px;top:1283.54px;font-size:22.31px;line-height:22.31px;color:#9ba3af;letter-spacing:0.800px;-webkit-text-stroke:0.25px #9ba3af;">04</div>
<div class="t" style="left:1714.14px;top:1261.74px;font-size:22.31px;line-height:22.31px;color:#9ba3af;letter-spacing:0.450px;-webkit-text-stroke:0.25px #9ba3af;">22:31</div>
<div class="t" style="left:1710.94px;top:1283.54px;font-size:22.31px;line-height:22.31px;color:#9ba3af;letter-spacing:0.800px;-webkit-text-stroke:0.25px #9ba3af;">04</div>
<div class="t" style="left:1749.74px;top:1283.54px;font-size:22.31px;line-height:22.31px;color:#9ba3af;letter-spacing:0.800px;-webkit-text-stroke:0.25px #9ba3af;">04</div>
<div class="t" style="left:1810.70px;top:1261.74px;font-size:22.31px;line-height:22.31px;color:#9ba3af;letter-spacing:0.450px;-webkit-text-stroke:0.25px #9ba3af;">22:34</div>
<div class="t" style="left:1807.50px;top:1283.54px;font-size:22.31px;line-height:22.31px;color:#9ba3af;letter-spacing:0.800px;-webkit-text-stroke:0.25px #9ba3af;">04</div>
<div class="t" style="left:1846.30px;top:1283.54px;font-size:22.31px;line-height:22.31px;color:#9ba3af;letter-spacing:0.800px;-webkit-text-stroke:0.25px #9ba3af;">04</div>
<div class="t" style="left:1907.25px;top:1261.74px;font-size:22.31px;line-height:22.31px;color:#9ba3af;letter-spacing:0.450px;-webkit-text-stroke:0.25px #9ba3af;">22:37</div>
<div class="t" style="left:1904.05px;top:1283.54px;font-size:22.31px;line-height:22.31px;color:#9ba3af;letter-spacing:0.800px;-webkit-text-stroke:0.25px #9ba3af;">04</div>
<div class="t" style="left:1942.85px;top:1283.54px;font-size:22.31px;line-height:22.31px;color:#9ba3af;letter-spacing:0.800px;-webkit-text-stroke:0.25px #9ba3af;">04</div>
<div class="t" style="left:2003.80px;top:1261.74px;font-size:22.31px;line-height:22.31px;color:#9ba3af;letter-spacing:0.450px;-webkit-text-stroke:0.25px #9ba3af;">22:40</div>
<div class="t" style="left:2000.60px;top:1283.54px;font-size:22.31px;line-height:22.31px;color:#9ba3af;letter-spacing:0.800px;-webkit-text-stroke:0.25px #9ba3af;">04</div>
<div class="t" style="left:2039.40px;top:1283.54px;font-size:22.31px;line-height:22.31px;color:#9ba3af;letter-spacing:0.800px;-webkit-text-stroke:0.25px #9ba3af;">04</div>
<div class="t" style="left:2100.35px;top:1261.74px;font-size:22.31px;line-height:22.31px;color:#9ba3af;letter-spacing:0.450px;-webkit-text-stroke:0.25px #9ba3af;">22:43</div>
<div class="t" style="left:2097.15px;top:1283.54px;font-size:22.31px;line-height:22.31px;color:#9ba3af;letter-spacing:0.800px;-webkit-text-stroke:0.25px #9ba3af;">04</div>
<div class="t" style="left:2135.95px;top:1283.54px;font-size:22.31px;line-height:22.31px;color:#9ba3af;letter-spacing:0.800px;-webkit-text-stroke:0.25px #9ba3af;">04</div>
<div class="t" style="left:2196.90px;top:1261.74px;font-size:22.31px;line-height:22.31px;color:#9ba3af;letter-spacing:0.450px;-webkit-text-stroke:0.25px #9ba3af;">22:46</div>
<div class="t" style="left:2193.70px;top:1283.54px;font-size:22.31px;line-height:22.31px;color:#9ba3af;letter-spacing:0.800px;-webkit-text-stroke:0.25px #9ba3af;">04</div>
<div class="t" style="left:2232.50px;top:1283.54px;font-size:22.31px;line-height:22.31px;color:#9ba3af;letter-spacing:0.800px;-webkit-text-stroke:0.25px #9ba3af;">04</div>
<div class="t" style="left:2293.45px;top:1261.74px;font-size:22.31px;line-height:22.31px;color:#9ba3af;letter-spacing:0.450px;-webkit-text-stroke:0.25px #9ba3af;">22:49</div>
<div class="t" style="left:2290.25px;top:1283.54px;font-size:22.31px;line-height:22.31px;color:#9ba3af;letter-spacing:0.800px;-webkit-text-stroke:0.25px #9ba3af;">04</div>
<div class="t" style="left:2329.05px;top:1283.54px;font-size:22.31px;line-height:22.31px;color:#9ba3af;letter-spacing:0.800px;-webkit-text-stroke:0.25px #9ba3af;">04</div>
<div class="t" style="left:2390.00px;top:1261.74px;font-size:22.31px;line-height:22.31px;color:#9ba3af;letter-spacing:0.450px;-webkit-text-stroke:0.25px #9ba3af;">22:52</div>
<div class="t" style="left:2386.80px;top:1283.54px;font-size:22.31px;line-height:22.31px;color:#9ba3af;letter-spacing:0.800px;-webkit-text-stroke:0.25px #9ba3af;">04</div>
<div class="t" style="left:2425.60px;top:1283.54px;font-size:22.31px;line-height:22.31px;color:#9ba3af;letter-spacing:0.800px;-webkit-text-stroke:0.25px #9ba3af;">04</div>
<div class="t" style="left:2486.56px;top:1261.74px;font-size:22.31px;line-height:22.31px;color:#9ba3af;letter-spacing:0.450px;-webkit-text-stroke:0.25px #9ba3af;">22:55</div>
<div class="t" style="left:2483.36px;top:1283.54px;font-size:22.31px;line-height:22.31px;color:#9ba3af;letter-spacing:0.800px;-webkit-text-stroke:0.25px #9ba3af;">04</div>
<div class="t" style="left:2522.16px;top:1283.54px;font-size:22.31px;line-height:22.31px;color:#9ba3af;letter-spacing:0.800px;-webkit-text-stroke:0.25px #9ba3af;">04</div>
<div class="t" style="left:2583.11px;top:1261.74px;font-size:22.31px;line-height:22.31px;color:#9ba3af;letter-spacing:0.450px;-webkit-text-stroke:0.25px #9ba3af;">22:58</div>
<div class="t" style="left:2579.91px;top:1283.54px;font-size:22.31px;line-height:22.31px;color:#9ba3af;letter-spacing:0.800px;-webkit-text-stroke:0.25px #9ba3af;">04</div>
<div class="t" style="left:2618.71px;top:1283.54px;font-size:22.31px;line-height:22.31px;color:#9ba3af;letter-spacing:0.800px;-webkit-text-stroke:0.25px #9ba3af;">04</div>
<svg class="a" style="left:0;top:0;pointer-events:none" width="3834" height="1712" viewBox="0 0 3834 1712"><line x1="1630.3" y1="1006.8" x2="2628.0" y2="1006.8" stroke="#e8e9ec" stroke-width="2" stroke-dasharray="8 4"/><line x1="1630.3" y1="1054.8" x2="2628.0" y2="1054.8" stroke="#e8e9ec" stroke-width="2" stroke-dasharray="8 4"/><line x1="1630.3" y1="1102.8" x2="2628.0" y2="1102.8" stroke="#e8e9ec" stroke-width="2" stroke-dasharray="8 4"/><line x1="1630.3" y1="1150.7" x2="2628.0" y2="1150.7" stroke="#e8e9ec" stroke-width="2" stroke-dasharray="8 4"/><line x1="1630.3" y1="1198.7" x2="2628.0" y2="1198.7" stroke="#e8e9ec" stroke-width="2" stroke-dasharray="8 4"/><line x1="1630.3" y1="1246.7" x2="2628.0" y2="1246.7" stroke="#e8e9ec" stroke-width="2" stroke-dasharray="8 4"/><line x1="1646.4" y1="1246.7" x2="1646.4" y2="1256.3" stroke="#e3e6ea" stroke-width="2"/><rect x="1641.0" y="1295.0" width="10.8" height="2.4" fill="#9ba3af"/><line x1="1742.9" y1="1246.7" x2="1742.9" y2="1256.3" stroke="#e3e6ea" stroke-width="2"/><rect x="1737.5" y="1295.0" width="10.8" height="2.4" fill="#9ba3af"/><line x1="1839.5" y1="1246.7" x2="1839.5" y2="1256.3" stroke="#e3e6ea" stroke-width="2"/><rect x="1834.1" y="1295.0" width="10.8" height="2.4" fill="#9ba3af"/><line x1="1936.0" y1="1246.7" x2="1936.0" y2="1256.3" stroke="#e3e6ea" stroke-width="2"/><rect x="1930.6" y="1295.0" width="10.8" height="2.4" fill="#9ba3af"/><line x1="2032.6" y1="1246.7" x2="2032.6" y2="1256.3" stroke="#e3e6ea" stroke-width="2"/><rect x="2027.2" y="1295.0" width="10.8" height="2.4" fill="#9ba3af"/><line x1="2129.2" y1="1246.7" x2="2129.2" y2="1256.3" stroke="#e3e6ea" stroke-width="2"/><rect x="2123.8" y="1295.0" width="10.8" height="2.4" fill="#9ba3af"/><line x1="2225.7" y1="1246.7" x2="2225.7" y2="1256.3" stroke="#e3e6ea" stroke-width="2"/><rect x="2220.3" y="1295.0" width="10.8" height="2.4" fill="#9ba3af"/><line x1="2322.3" y1="1246.7" x2="2322.3" y2="1256.3" stroke="#e3e6ea" stroke-width="2"/><rect x="2316.9" y="1295.0" width="10.8" height="2.4" fill="#9ba3af"/><line x1="2418.8" y1="1246.7" x2="2418.8" y2="1256.3" stroke="#e3e6ea" stroke-width="2"/><rect x="2413.4" y="1295.0" width="10.8" height="2.4" fill="#9ba3af"/><line x1="2515.4" y1="1246.7" x2="2515.4" y2="1256.3" stroke="#e3e6ea" stroke-width="2"/><rect x="2510.0" y="1295.0" width="10.8" height="2.4" fill="#9ba3af"/><line x1="2611.9" y1="1246.7" x2="2611.9" y2="1256.3" stroke="#e3e6ea" stroke-width="2"/><rect x="2606.5" y="1295.0" width="10.8" height="2.4" fill="#9ba3af"/><polyline points="1646.4,1246.7 1678.6,1246.7 1710.8,1246.7 1742.9,1246.7 1775.1,1246.7 1807.3,1246.7 1839.5,1246.7 1871.7,1246.7 1903.9,1246.7 1936.0,1246.7 1968.2,1246.7 2000.4,1246.7 2032.6,1246.7 2064.8,1246.7 2097.0,1246.7 2129.2,1246.7 2161.3,1246.7 2193.5,1246.7 2225.7,1246.7 2257.9,1246.7 2290.1,1246.7 2322.3,1246.7 2354.4,1246.7 2386.6,1246.7 2418.8,1246.7 2451.0,1246.7 2483.2,1246.7 2515.4,1246.7 2547.5,1246.7 2579.7,1246.7 2611.9,1246.7" fill="none" stroke="#4a9fdb" stroke-width="3" stroke-linejoin="bevel"/></svg>
<div class="t" style="left:2729.30px;top:995.50px;font-size:22.0px;line-height:22.0px;color:#9ba3af;letter-spacing:0.000px;-webkit-text-stroke:0.25px #9ba3af;">1</div>
<div class="t" style="left:2710.90px;top:1043.48px;font-size:22.0px;line-height:22.0px;color:#9ba3af;letter-spacing:0.000px;-webkit-text-stroke:0.25px #9ba3af;">0.8</div>
<div class="t" style="left:2710.90px;top:1091.46px;font-size:22.0px;line-height:22.0px;color:#9ba3af;letter-spacing:0.000px;-webkit-text-stroke:0.25px #9ba3af;">0.6</div>
<div class="t" style="left:2710.90px;top:1139.44px;font-size:22.0px;line-height:22.0px;color:#9ba3af;letter-spacing:0.000px;-webkit-text-stroke:0.25px #9ba3af;">0.4</div>
<div class="t" style="left:2710.90px;top:1187.42px;font-size:22.0px;line-height:22.0px;color:#9ba3af;letter-spacing:0.000px;-webkit-text-stroke:0.25px #9ba3af;">0.2</div>
<div class="t" style="left:2729.30px;top:1235.40px;font-size:22.0px;line-height:22.0px;color:#9ba3af;letter-spacing:0.000px;-webkit-text-stroke:0.25px #9ba3af;">0</div>
<div class="t" style="left:2745.69px;top:1261.74px;font-size:22.31px;line-height:22.31px;color:#9ba3af;letter-spacing:0.450px;-webkit-text-stroke:0.25px #9ba3af;">22:28</div>
<div class="t" style="left:2742.49px;top:1283.54px;font-size:22.31px;line-height:22.31px;color:#9ba3af;letter-spacing:0.800px;-webkit-text-stroke:0.25px #9ba3af;">04</div>
<div class="t" style="left:2781.29px;top:1283.54px;font-size:22.31px;line-height:22.31px;color:#9ba3af;letter-spacing:0.800px;-webkit-text-stroke:0.25px #9ba3af;">04</div>
<div class="t" style="left:2842.23px;top:1261.74px;font-size:22.31px;line-height:22.31px;color:#9ba3af;letter-spacing:0.450px;-webkit-text-stroke:0.25px #9ba3af;">22:31</div>
<div class="t" style="left:2839.03px;top:1283.54px;font-size:22.31px;line-height:22.31px;color:#9ba3af;letter-spacing:0.800px;-webkit-text-stroke:0.25px #9ba3af;">04</div>
<div class="t" style="left:2877.83px;top:1283.54px;font-size:22.31px;line-height:22.31px;color:#9ba3af;letter-spacing:0.800px;-webkit-text-stroke:0.25px #9ba3af;">04</div>
<div class="t" style="left:2938.77px;top:1261.74px;font-size:22.31px;line-height:22.31px;color:#9ba3af;letter-spacing:0.450px;-webkit-text-stroke:0.25px #9ba3af;">22:34</div>
<div class="t" style="left:2935.57px;top:1283.54px;font-size:22.31px;line-height:22.31px;color:#9ba3af;letter-spacing:0.800px;-webkit-text-stroke:0.25px #9ba3af;">04</div>
<div class="t" style="left:2974.37px;top:1283.54px;font-size:22.31px;line-height:22.31px;color:#9ba3af;letter-spacing:0.800px;-webkit-text-stroke:0.25px #9ba3af;">04</div>
<div class="t" style="left:3035.32px;top:1261.74px;font-size:22.31px;line-height:22.31px;color:#9ba3af;letter-spacing:0.450px;-webkit-text-stroke:0.25px #9ba3af;">22:37</div>
<div class="t" style="left:3032.12px;top:1283.54px;font-size:22.31px;line-height:22.31px;color:#9ba3af;letter-spacing:0.800px;-webkit-text-stroke:0.25px #9ba3af;">04</div>
<div class="t" style="left:3070.92px;top:1283.54px;font-size:22.31px;line-height:22.31px;color:#9ba3af;letter-spacing:0.800px;-webkit-text-stroke:0.25px #9ba3af;">04</div>
<div class="t" style="left:3131.86px;top:1261.74px;font-size:22.31px;line-height:22.31px;color:#9ba3af;letter-spacing:0.450px;-webkit-text-stroke:0.25px #9ba3af;">22:40</div>
<div class="t" style="left:3128.66px;top:1283.54px;font-size:22.31px;line-height:22.31px;color:#9ba3af;letter-spacing:0.800px;-webkit-text-stroke:0.25px #9ba3af;">04</div>
<div class="t" style="left:3167.46px;top:1283.54px;font-size:22.31px;line-height:22.31px;color:#9ba3af;letter-spacing:0.800px;-webkit-text-stroke:0.25px #9ba3af;">04</div>
<div class="t" style="left:3228.40px;top:1261.74px;font-size:22.31px;line-height:22.31px;color:#9ba3af;letter-spacing:0.450px;-webkit-text-stroke:0.25px #9ba3af;">22:43</div>
<div class="t" style="left:3225.20px;top:1283.54px;font-size:22.31px;line-height:22.31px;color:#9ba3af;letter-spacing:0.800px;-webkit-text-stroke:0.25px #9ba3af;">04</div>
<div class="t" style="left:3264.00px;top:1283.54px;font-size:22.31px;line-height:22.31px;color:#9ba3af;letter-spacing:0.800px;-webkit-text-stroke:0.25px #9ba3af;">04</div>
<div class="t" style="left:3324.94px;top:1261.74px;font-size:22.31px;line-height:22.31px;color:#9ba3af;letter-spacing:0.450px;-webkit-text-stroke:0.25px #9ba3af;">22:46</div>
<div class="t" style="left:3321.74px;top:1283.54px;font-size:22.31px;line-height:22.31px;color:#9ba3af;letter-spacing:0.800px;-webkit-text-stroke:0.25px #9ba3af;">04</div>
<div class="t" style="left:3360.54px;top:1283.54px;font-size:22.31px;line-height:22.31px;color:#9ba3af;letter-spacing:0.800px;-webkit-text-stroke:0.25px #9ba3af;">04</div>
<div class="t" style="left:3421.48px;top:1261.74px;font-size:22.31px;line-height:22.31px;color:#9ba3af;letter-spacing:0.450px;-webkit-text-stroke:0.25px #9ba3af;">22:49</div>
<div class="t" style="left:3418.28px;top:1283.54px;font-size:22.31px;line-height:22.31px;color:#9ba3af;letter-spacing:0.800px;-webkit-text-stroke:0.25px #9ba3af;">04</div>
<div class="t" style="left:3457.08px;top:1283.54px;font-size:22.31px;line-height:22.31px;color:#9ba3af;letter-spacing:0.800px;-webkit-text-stroke:0.25px #9ba3af;">04</div>
<div class="t" style="left:3518.03px;top:1261.74px;font-size:22.31px;line-height:22.31px;color:#9ba3af;letter-spacing:0.450px;-webkit-text-stroke:0.25px #9ba3af;">22:52</div>
<div class="t" style="left:3514.83px;top:1283.54px;font-size:22.31px;line-height:22.31px;color:#9ba3af;letter-spacing:0.800px;-webkit-text-stroke:0.25px #9ba3af;">04</div>
<div class="t" style="left:3553.63px;top:1283.54px;font-size:22.31px;line-height:22.31px;color:#9ba3af;letter-spacing:0.800px;-webkit-text-stroke:0.25px #9ba3af;">04</div>
<div class="t" style="left:3614.57px;top:1261.74px;font-size:22.31px;line-height:22.31px;color:#9ba3af;letter-spacing:0.450px;-webkit-text-stroke:0.25px #9ba3af;">22:55</div>
<div class="t" style="left:3611.37px;top:1283.54px;font-size:22.31px;line-height:22.31px;color:#9ba3af;letter-spacing:0.800px;-webkit-text-stroke:0.25px #9ba3af;">04</div>
<div class="t" style="left:3650.17px;top:1283.54px;font-size:22.31px;line-height:22.31px;color:#9ba3af;letter-spacing:0.800px;-webkit-text-stroke:0.25px #9ba3af;">04</div>
<div class="t" style="left:3711.11px;top:1261.74px;font-size:22.31px;line-height:22.31px;color:#9ba3af;letter-spacing:0.450px;-webkit-text-stroke:0.25px #9ba3af;">22:58</div>
<div class="t" style="left:3707.91px;top:1283.54px;font-size:22.31px;line-height:22.31px;color:#9ba3af;letter-spacing:0.800px;-webkit-text-stroke:0.25px #9ba3af;">04</div>
<div class="t" style="left:3746.71px;top:1283.54px;font-size:22.31px;line-height:22.31px;color:#9ba3af;letter-spacing:0.800px;-webkit-text-stroke:0.25px #9ba3af;">04</div>
<svg class="a" style="left:0;top:0;pointer-events:none" width="3834" height="1712" viewBox="0 0 3834 1712"><line x1="2758.4" y1="1006.8" x2="3756.0" y2="1006.8" stroke="#e8e9ec" stroke-width="2" stroke-dasharray="8 4"/><line x1="2758.4" y1="1054.8" x2="3756.0" y2="1054.8" stroke="#e8e9ec" stroke-width="2" stroke-dasharray="8 4"/><line x1="2758.4" y1="1102.8" x2="3756.0" y2="1102.8" stroke="#e8e9ec" stroke-width="2" stroke-dasharray="8 4"/><line x1="2758.4" y1="1150.7" x2="3756.0" y2="1150.7" stroke="#e8e9ec" stroke-width="2" stroke-dasharray="8 4"/><line x1="2758.4" y1="1198.7" x2="3756.0" y2="1198.7" stroke="#e8e9ec" stroke-width="2" stroke-dasharray="8 4"/><line x1="2758.4" y1="1246.7" x2="3756.0" y2="1246.7" stroke="#e8e9ec" stroke-width="2" stroke-dasharray="8 4"/><line x1="2774.5" y1="1246.7" x2="2774.5" y2="1256.3" stroke="#e3e6ea" stroke-width="2"/><rect x="2769.1" y="1295.0" width="10.8" height="2.4" fill="#9ba3af"/><line x1="2871.0" y1="1246.7" x2="2871.0" y2="1256.3" stroke="#e3e6ea" stroke-width="2"/><rect x="2865.6" y="1295.0" width="10.8" height="2.4" fill="#9ba3af"/><line x1="2967.6" y1="1246.7" x2="2967.6" y2="1256.3" stroke="#e3e6ea" stroke-width="2"/><rect x="2962.2" y="1295.0" width="10.8" height="2.4" fill="#9ba3af"/><line x1="3064.1" y1="1246.7" x2="3064.1" y2="1256.3" stroke="#e3e6ea" stroke-width="2"/><rect x="3058.7" y="1295.0" width="10.8" height="2.4" fill="#9ba3af"/><line x1="3160.7" y1="1246.7" x2="3160.7" y2="1256.3" stroke="#e3e6ea" stroke-width="2"/><rect x="3155.3" y="1295.0" width="10.8" height="2.4" fill="#9ba3af"/><line x1="3257.2" y1="1246.7" x2="3257.2" y2="1256.3" stroke="#e3e6ea" stroke-width="2"/><rect x="3251.8" y="1295.0" width="10.8" height="2.4" fill="#9ba3af"/><line x1="3353.7" y1="1246.7" x2="3353.7" y2="1256.3" stroke="#e3e6ea" stroke-width="2"/><rect x="3348.3" y="1295.0" width="10.8" height="2.4" fill="#9ba3af"/><line x1="3450.3" y1="1246.7" x2="3450.3" y2="1256.3" stroke="#e3e6ea" stroke-width="2"/><rect x="3444.9" y="1295.0" width="10.8" height="2.4" fill="#9ba3af"/><line x1="3546.8" y1="1246.7" x2="3546.8" y2="1256.3" stroke="#e3e6ea" stroke-width="2"/><rect x="3541.4" y="1295.0" width="10.8" height="2.4" fill="#9ba3af"/><line x1="3643.4" y1="1246.7" x2="3643.4" y2="1256.3" stroke="#e3e6ea" stroke-width="2"/><rect x="3638.0" y="1295.0" width="10.8" height="2.4" fill="#9ba3af"/><line x1="3739.9" y1="1246.7" x2="3739.9" y2="1256.3" stroke="#e3e6ea" stroke-width="2"/><rect x="3734.5" y="1295.0" width="10.8" height="2.4" fill="#9ba3af"/><polyline points="2774.5,1246.7 2806.7,1246.7 2838.9,1246.7 2871.0,1246.7 2903.2,1246.7 2935.4,1246.7 2967.6,1246.7 2999.8,1246.7 3031.9,1246.7 3064.1,1246.7 3096.3,1246.7 3128.5,1246.7 3160.7,1246.7 3192.8,1246.7 3225.0,1246.7 3257.2,1246.7 3289.4,1246.7 3321.6,1246.7 3353.7,1246.7 3385.9,1246.7 3418.1,1246.7 3450.3,1246.7 3482.5,1246.7 3514.6,1246.7 3546.8,1246.7 3579.0,1246.7 3611.2,1246.7 3643.4,1246.7 3675.5,1246.7 3707.7,1246.7 3739.9,1246.7" fill="none" stroke="#4a9fdb" stroke-width="3" stroke-linejoin="bevel"/></svg>
<div class="a" style="left:476px;top:1448.0px;width:67.3px;height:35.5px;background:#3a3e46;border-radius:7px;"></div>
<div class="t" style="left:486.30px;top:1453.09px;font-size:24.72px;line-height:24.72px;color:#f2f2f2;letter-spacing:-0.467px;-webkit-text-stroke:0.25px #f2f2f2;">0.08</div>
<div class="t" style="left:562.50px;top:1453.99px;font-size:24.72px;line-height:24.72px;color:#2c3e50;letter-spacing:-0.366px;-webkit-text-stroke:0.25px #2c3e50;">0bd718f0b3df49a6bfe1e2ce48f98a4f@10.4.2.99</div>
<div class="a" style="left:476px;top:1485.8px;width:1026px;height:12px;background:#eaedf3;border-radius:6px;"></div>
<div class="a" style="left:476px;top:1485.8px;width:1026.0px;height:12px;background:#b99cef;border-radius:6px;"></div>
<svg class="a" style="left:1469.3px;top:1448.8px" width="30" height="36" viewBox="0 0 30 36"><rect x="2.4" y="4.6" width="23.2" height="27.8" rx="6" fill="none" stroke="#2d3e50" stroke-width="4.4"/><path d="M8,3 H11 a3,3 0 0 1 6,0 H20 V8.5 H8 Z" fill="#2d3e50"/><g stroke="#2d3e50" stroke-width="2.2" stroke-linecap="round"><line x1="7.6" y1="14.4" x2="17.8" y2="14.4"/><line x1="7.6" y1="18.9" x2="20.2" y2="18.9"/><line x1="7.6" y1="23.3" x2="15.6" y2="23.3"/></g></svg>
<div class="a" style="left:476px;top:1521.6px;width:67.3px;height:35.5px;background:#3a3e46;border-radius:7px;"></div>
<div class="t" style="left:486.30px;top:1526.69px;font-size:24.72px;line-height:24.72px;color:#f2f2f2;letter-spacing:-0.467px;-webkit-text-stroke:0.25px #f2f2f2;">0.05</div>
<div class="t" style="left:562.50px;top:1527.59px;font-size:24.72px;line-height:24.72px;color:#2c3e50;letter-spacing:-0.386px;-webkit-text-stroke:0.25px #2c3e50;">24228463c05b47c7813fa502544418eb@10.4.0.205</div>
<div class="a" style="left:476px;top:1559.4px;width:1026px;height:12px;background:#eaedf3;border-radius:6px;"></div>
<div class="a" style="left:476px;top:1559.4px;width:641.2px;height:12px;background:#b99cef;border-radius:6px;"></div>
<svg class="a" style="left:1469.3px;top:1522.4px" width="30" height="36" viewBox="0 0 30 36"><rect x="2.4" y="4.6" width="23.2" height="27.8" rx="6" fill="none" stroke="#2d3e50" stroke-width="4.4"/><path d="M8,3 H11 a3,3 0 0 1 6,0 H20 V8.5 H8 Z" fill="#2d3e50"/><g stroke="#2d3e50" stroke-width="2.2" stroke-linecap="round"><line x1="7.6" y1="14.4" x2="17.8" y2="14.4"/><line x1="7.6" y1="18.9" x2="20.2" y2="18.9"/><line x1="7.6" y1="23.3" x2="15.6" y2="23.3"/></g></svg>
<div class="a" style="left:476px;top:1595.2px;width:67.3px;height:35.5px;background:#3a3e46;border-radius:7px;"></div>
<div class="t" style="left:486.30px;top:1600.29px;font-size:24.72px;line-height:24.72px;color:#f2f2f2;letter-spacing:-0.467px;-webkit-text-stroke:0.25px #f2f2f2;">0.05</div>
<div class="t" style="left:562.50px;top:1601.19px;font-size:24.72px;line-height:24.72px;color:#2c3e50;letter-spacing:-0.381px;-webkit-text-stroke:0.25px #2c3e50;">a7dde61ca4fa48a4b80dab7f7eeb56ce@10.4.0.201</div>
<div class="a" style="left:476px;top:1633.0px;width:1026px;height:12px;background:#eaedf3;border-radius:6px;"></div>
<div class="a" style="left:476px;top:1633.0px;width:641.2px;height:12px;background:#b99cef;border-radius:6px;"></div>
<svg class="a" style="left:1469.3px;top:1596.0px" width="30" height="36" viewBox="0 0 30 36"><rect x="2.4" y="4.6" width="23.2" height="27.8" rx="6" fill="none" stroke="#2d3e50" stroke-width="4.4"/><path d="M8,3 H11 a3,3 0 0 1 6,0 H20 V8.5 H8 Z" fill="#2d3e50"/><g stroke="#2d3e50" stroke-width="2.2" stroke-linecap="round"><line x1="7.6" y1="14.4" x2="17.8" y2="14.4"/><line x1="7.6" y1="18.9" x2="20.2" y2="18.9"/><line x1="7.6" y1="23.3" x2="15.6" y2="23.3"/></g></svg>
<div class="a" style="left:476px;top:1668.8px;width:67.3px;height:35.5px;background:#3a3e46;border-radius:7px;"></div>
<div class="t" style="left:486.30px;top:1673.89px;font-size:24.72px;line-height:24.72px;color:#f2f2f2;letter-spacing:-0.467px;-webkit-text-stroke:0.25px #f2f2f2;">0.05</div>
<div class="t" style="left:562.50px;top:1674.79px;font-size:24.72px;line-height:24.72px;color:#2c3e50;letter-spacing:-0.367px;-webkit-text-stroke:0.25px #2c3e50;">abee1c9dddaf4f6286fbf6dfd4013cce@10.4.0.203</div>
<div class="a" style="left:476px;top:1706.6px;width:1026px;height:12px;background:#eaedf3;border-radius:6px;"></div>
<div class="a" style="left:476px;top:1706.6px;width:641.2px;height:12px;background:#b99cef;border-radius:6px;"></div>
<svg class="a" style="left:1469.3px;top:1669.6px" width="30" height="36" viewBox="0 0 30 36"><rect x="2.4" y="4.6" width="23.2" height="27.8" rx="6" fill="none" stroke="#2d3e50" stroke-width="4.4"/><path d="M8,3 H11 a3,3 0 0 1 6,0 H20 V8.5 H8 Z" fill="#2d3e50"/><g stroke="#2d3e50" stroke-width="2.2" stroke-linecap="round"><line x1="7.6" y1="14.4" x2="17.8" y2="14.4"/><line x1="7.6" y1="18.9" x2="20.2" y2="18.9"/><line x1="7.6" y1="23.3" x2="15.6" y2="23.3"/></g></svg>
<div class="a" style="left:1602px;top:1448.0px;width:67.3px;height:35.5px;background:#3a3e46;border-radius:7px;"></div>
<div class="t" style="left:1612.30px;top:1453.09px;font-size:24.72px;line-height:24.72px;color:#f2f2f2;letter-spacing:-0.467px;-webkit-text-stroke:0.25px #f2f2f2;">0.61</div>
<div class="t" style="left:1688.50px;top:1453.99px;font-size:24.72px;line-height:24.72px;color:#2c3e50;letter-spacing:-0.381px;-webkit-text-stroke:0.25px #2c3e50;">a7dde61ca4fa48a4b80dab7f7eeb56ce@10.4.0.201</div>
<div class="a" style="left:1602px;top:1485.8px;width:1026px;height:12px;background:#eaedf3;border-radius:6px;"></div>
<div class="a" style="left:1602px;top:1485.8px;width:1026.0px;height:12px;background:#b99cef;border-radius:6px;"></div>
<svg class="a" style="left:2595.3px;top:1448.8px" width="30" height="36" viewBox="0 0 30 36"><rect x="2.4" y="4.6" width="23.2" height="27.8" rx="6" fill="none" stroke="#2d3e50" stroke-width="4.4"/><path d="M8,3 H11 a3,3 0 0 1 6,0 H20 V8.5 H8 Z" fill="#2d3e50"/><g stroke="#2d3e50" stroke-width="2.2" stroke-linecap="round"><line x1="7.6" y1="14.4" x2="17.8" y2="14.4"/><line x1="7.6" y1="18.9" x2="20.2" y2="18.9"/><line x1="7.6" y1="23.3" x2="15.6" y2="23.3"/></g></svg>
<div class="a" style="left:1602px;top:1521.6px;width:67.3px;height:35.5px;background:#3a3e46;border-radius:7px;"></div>
<div class="t" style="left:1612.30px;top:1526.69px;font-size:24.72px;line-height:24.72px;color:#f2f2f2;letter-spacing:-0.467px;-webkit-text-stroke:0.25px #f2f2f2;">0.34</div>
<div class="t" style="left:1688.50px;top:1527.59px;font-size:24.72px;line-height:24.72px;color:#2c3e50;letter-spacing:-0.367px;-webkit-text-stroke:0.25px #2c3e50;">abee1c9dddaf4f6286fbf6dfd4013cce@10.4.0.203</div>
<div class="a" style="left:1602px;top:1559.4px;width:1026px;height:12px;background:#eaedf3;border-radius:6px;"></div>
<div class="a" style="left:1602px;top:1559.4px;width:571.9px;height:12px;background:#b99cef;border-radius:6px;"></div>
<svg class="a" style="left:2595.3px;top:1522.4px" width="30" height="36" viewBox="0 0 30 36"><rect x="2.4" y="4.6" width="23.2" height="27.8" rx="6" fill="none" stroke="#2d3e50" stroke-width="4.4"/><path d="M8,3 H11 a3,3 0 0 1 6,0 H20 V8.5 H8 Z" fill="#2d3e50"/><g stroke="#2d3e50" stroke-width="2.2" stroke-linecap="round"><line x1="7.6" y1="14.4" x2="17.8" y2="14.4"/><line x1="7.6" y1="18.9" x2="20.2" y2="18.9"/><line x1="7.6" y1="23.3" x2="15.6" y2="23.3"/></g></svg>
<div class="a" style="left:1602px;top:1595.2px;width:67.3px;height:35.5px;background:#3a3e46;border-radius:7px;"></div>
<div class="t" style="left:1612.30px;top:1600.29px;font-size:24.72px;line-height:24.72px;color:#f2f2f2;letter-spacing:-0.467px;-webkit-text-stroke:0.25px #f2f2f2;">0.27</div>
<div class="t" style="left:1688.50px;top:1601.19px;font-size:24.72px;line-height:24.72px;color:#2c3e50;letter-spacing:-0.386px;-webkit-text-stroke:0.25px #2c3e50;">24228463c05b47c7813fa502544418eb@10.4.0.205</div>
<div class="a" style="left:1602px;top:1633.0px;width:1026px;height:12px;background:#eaedf3;border-radius:6px;"></div>
<div class="a" style="left:1602px;top:1633.0px;width:454.1px;height:12px;background:#b99cef;border-radius:6px;"></div>
<svg class="a" style="left:2595.3px;top:1596.0px" width="30" height="36" viewBox="0 0 30 36"><rect x="2.4" y="4.6" width="23.2" height="27.8" rx="6" fill="none" stroke="#2d3e50" stroke-width="4.4"/><path d="M8,3 H11 a3,3 0 0 1 6,0 H20 V8.5 H8 Z" fill="#2d3e50"/><g stroke="#2d3e50" stroke-width="2.2" stroke-linecap="round"><line x1="7.6" y1="14.4" x2="17.8" y2="14.4"/><line x1="7.6" y1="18.9" x2="20.2" y2="18.9"/><line x1="7.6" y1="23.3" x2="15.6" y2="23.3"/></g></svg>
<div class="a" style="left:1602px;top:1668.8px;width:67.3px;height:35.5px;background:#3a3e46;border-radius:7px;"></div>
<div class="t" style="left:1612.30px;top:1673.89px;font-size:24.72px;line-height:24.72px;color:#f2f2f2;letter-spacing:-0.467px;-webkit-text-stroke:0.25px #f2f2f2;">0.01</div>
<div class="t" style="left:1688.50px;top:1674.79px;font-size:24.72px;line-height:24.72px;color:#2c3e50;letter-spacing:-0.366px;-webkit-text-stroke:0.25px #2c3e50;">0bd718f0b3df49a6bfe1e2ce48f98a4f@10.4.2.99</div>
<div class="a" style="left:1602px;top:1706.6px;width:1026px;height:12px;background:#eaedf3;border-radius:6px;"></div>
<div class="a" style="left:1602px;top:1706.6px;width:16.8px;height:12px;background:#b99cef;border-radius:6px;"></div>
<svg class="a" style="left:2595.3px;top:1669.6px" width="30" height="36" viewBox="0 0 30 36"><rect x="2.4" y="4.6" width="23.2" height="27.8" rx="6" fill="none" stroke="#2d3e50" stroke-width="4.4"/><path d="M8,3 H11 a3,3 0 0 1 6,0 H20 V8.5 H8 Z" fill="#2d3e50"/><g stroke="#2d3e50" stroke-width="2.2" stroke-linecap="round"><line x1="7.6" y1="14.4" x2="17.8" y2="14.4"/><line x1="7.6" y1="18.9" x2="20.2" y2="18.9"/><line x1="7.6" y1="23.3" x2="15.6" y2="23.3"/></g></svg>
<div class="a" style="left:2730px;top:1448.0px;width:60.6px;height:35.5px;background:#3a3e46;border-radius:7px;"></div>
<div class="t" style="left:2740.30px;top:1453.09px;font-size:24.72px;line-height:24.72px;color:#f2f2f2;letter-spacing:-0.600px;-webkit-text-stroke:0.25px #f2f2f2;">100</div>
<div class="t" style="left:2809.80px;top:1453.99px;font-size:24.72px;line-height:24.72px;color:#2c3e50;letter-spacing:-0.366px;-webkit-text-stroke:0.25px #2c3e50;">0bd718f0b3df49a6bfe1e2ce48f98a4f@10.4.2.99</div>
<div class="a" style="left:2730px;top:1485.8px;width:1026px;height:12px;background:#eaedf3;border-radius:6px;"></div>
<div class="a" style="left:2730px;top:1485.8px;width:1026.0px;height:12px;background:#b99cef;border-radius:6px;"></div>
<svg class="a" style="left:3723.3px;top:1448.8px" width="30" height="36" viewBox="0 0 30 36"><rect x="2.4" y="4.6" width="23.2" height="27.8" rx="6" fill="none" stroke="#2d3e50" stroke-width="4.4"/><path d="M8,3 H11 a3,3 0 0 1 6,0 H20 V8.5 H8 Z" fill="#2d3e50"/><g stroke="#2d3e50" stroke-width="2.2" stroke-linecap="round"><line x1="7.6" y1="14.4" x2="17.8" y2="14.4"/><line x1="7.6" y1="18.9" x2="20.2" y2="18.9"/><line x1="7.6" y1="23.3" x2="15.6" y2="23.3"/></g></svg>
<div class="a" style="left:2730px;top:1521.6px;width:60.6px;height:35.5px;background:#3a3e46;border-radius:7px;"></div>
<div class="t" style="left:2740.30px;top:1526.69px;font-size:24.72px;line-height:24.72px;color:#f2f2f2;letter-spacing:-0.600px;-webkit-text-stroke:0.25px #f2f2f2;">100</div>
<div class="t" style="left:2809.80px;top:1527.59px;font-size:24.72px;line-height:24.72px;color:#2c3e50;letter-spacing:-0.386px;-webkit-text-stroke:0.25px #2c3e50;">24228463c05b47c7813fa502544418eb@10.4.0.205</div>
<div class="a" style="left:2730px;top:1559.4px;width:1026px;height:12px;background:#eaedf3;border-radius:6px;"></div>
<div class="a" style="left:2730px;top:1559.4px;width:1026.0px;height:12px;background:#b99cef;border-radius:6px;"></div>
<svg class="a" style="left:3723.3px;top:1522.4px" width="30" height="36" viewBox="0 0 30 36"><rect x="2.4" y="4.6" width="23.2" height="27.8" rx="6" fill="none" stroke="#2d3e50" stroke-width="4.4"/><path d="M8,3 H11 a3,3 0 0 1 6,0 H20 V8.5 H8 Z" fill="#2d3e50"/><g stroke="#2d3e50" stroke-width="2.2" stroke-linecap="round"><line x1="7.6" y1="14.4" x2="17.8" y2="14.4"/><line x1="7.6" y1="18.9" x2="20.2" y2="18.9"/><line x1="7.6" y1="23.3" x2="15.6" y2="23.3"/></g></svg>
<div class="a" style="left:2730px;top:1595.2px;width:60.6px;height:35.5px;background:#3a3e46;border-radius:7px;"></div>
<div class="t" style="left:2740.30px;top:1600.29px;font-size:24.72px;line-height:24.72px;color:#f2f2f2;letter-spacing:-0.600px;-webkit-text-stroke:0.25px #f2f2f2;">100</div>
<div class="t" style="left:2809.80px;top:1601.19px;font-size:24.72px;line-height:24.72px;color:#2c3e50;letter-spacing:-0.381px;-webkit-text-stroke:0.25px #2c3e50;">a7dde61ca4fa48a4b80dab7f7eeb56ce@10.4.0.201</div>
<div class="a" style="left:2730px;top:1633.0px;width:1026px;height:12px;background:#eaedf3;border-radius:6px;"></div>
<div class="a" style="left:2730px;top:1633.0px;width:1026.0px;height:12px;background:#b99cef;border-radius:6px;"></div>
<svg class="a" style="left:3723.3px;top:1596.0px" width="30" height="36" viewBox="0 0 30 36"><rect x="2.4" y="4.6" width="23.2" height="27.8" rx="6" fill="none" stroke="#2d3e50" stroke-width="4.4"/><path d="M8,3 H11 a3,3 0 0 1 6,0 H20 V8.5 H8 Z" fill="#2d3e50"/><g stroke="#2d3e50" stroke-width="2.2" stroke-linecap="round"><line x1="7.6" y1="14.4" x2="17.8" y2="14.4"/><line x1="7.6" y1="18.9" x2="20.2" y2="18.9"/><line x1="7.6" y1="23.3" x2="15.6" y2="23.3"/></g></svg>
<div class="a" style="left:2730px;top:1668.8px;width:60.6px;height:35.5px;background:#3a3e46;border-radius:7px;"></div>
<div class="t" style="left:2740.30px;top:1673.89px;font-size:24.72px;line-height:24.72px;color:#f2f2f2;letter-spacing:-0.600px;-webkit-text-stroke:0.25px #f2f2f2;">100</div>
<div class="t" style="left:2809.80px;top:1674.79px;font-size:24.72px;line-height:24.72px;color:#2c3e50;letter-spacing:-0.367px;-webkit-text-stroke:0.25px #2c3e50;">abee1c9dddaf4f6286fbf6dfd4013cce@10.4.0.203</div>
<div class="a" style="left:2730px;top:1706.6px;width:1026px;height:12px;background:#eaedf3;border-radius:6px;"></div>
<div class="a" style="left:2730px;top:1706.6px;width:1026.0px;height:12px;background:#b99cef;border-radius:6px;"></div>
<svg class="a" style="left:3723.3px;top:1669.6px" width="30" height="36" viewBox="0 0 30 36"><rect x="2.4" y="4.6" width="23.2" height="27.8" rx="6" fill="none" stroke="#2d3e50" stroke-width="4.4"/><path d="M8,3 H11 a3,3 0 0 1 6,0 H20 V8.5 H8 Z" fill="#2d3e50"/><g stroke="#2d3e50" stroke-width="2.2" stroke-linecap="round"><line x1="7.6" y1="14.4" x2="17.8" y2="14.4"/><line x1="7.6" y1="18.9" x2="20.2" y2="18.9"/><line x1="7.6" y1="23.3" x2="15.6" y2="23.3"/></g></svg>
<div class="a" style="left:396px;top:1628px;width:3438px;height:84px;background:linear-gradient(to bottom, rgba(0,0,0,0), rgba(0,0,0,0.11));-webkit-mask-image:linear-gradient(to right,#000 0%,#000 82%,transparent 96%);"></div>
<div class="a" style="left:396px;top:1710px;width:3438px;height:2px;background:#e6e6e6;"></div>
<div class="a" style="left:0;top:1710px;width:396px;height:2px;background:#505458;"></div>
<svg class="a" style="left:0;top:1690px" width="24" height="22" viewBox="0 1690 24 22"><path d="M0,1692 A18,18 0 0 0 18,1710 L24,1710 L24,1712 L0,1712 Z" fill="#000"/><path d="M0,1692 A18,18 0 0 0 18,1710 L24,1710" fill="none" stroke="#5a5e63" stroke-width="1.5"/></svg>
<svg class="a" style="left:3810px;top:1688px" width="24" height="24" viewBox="3810 1688 24 24"><path d="M3834,1688 A22,22 0 0 1 3812,1710 L3810,1712 L3834,1712 Z" fill="#000"/></svg>
</body></html>
